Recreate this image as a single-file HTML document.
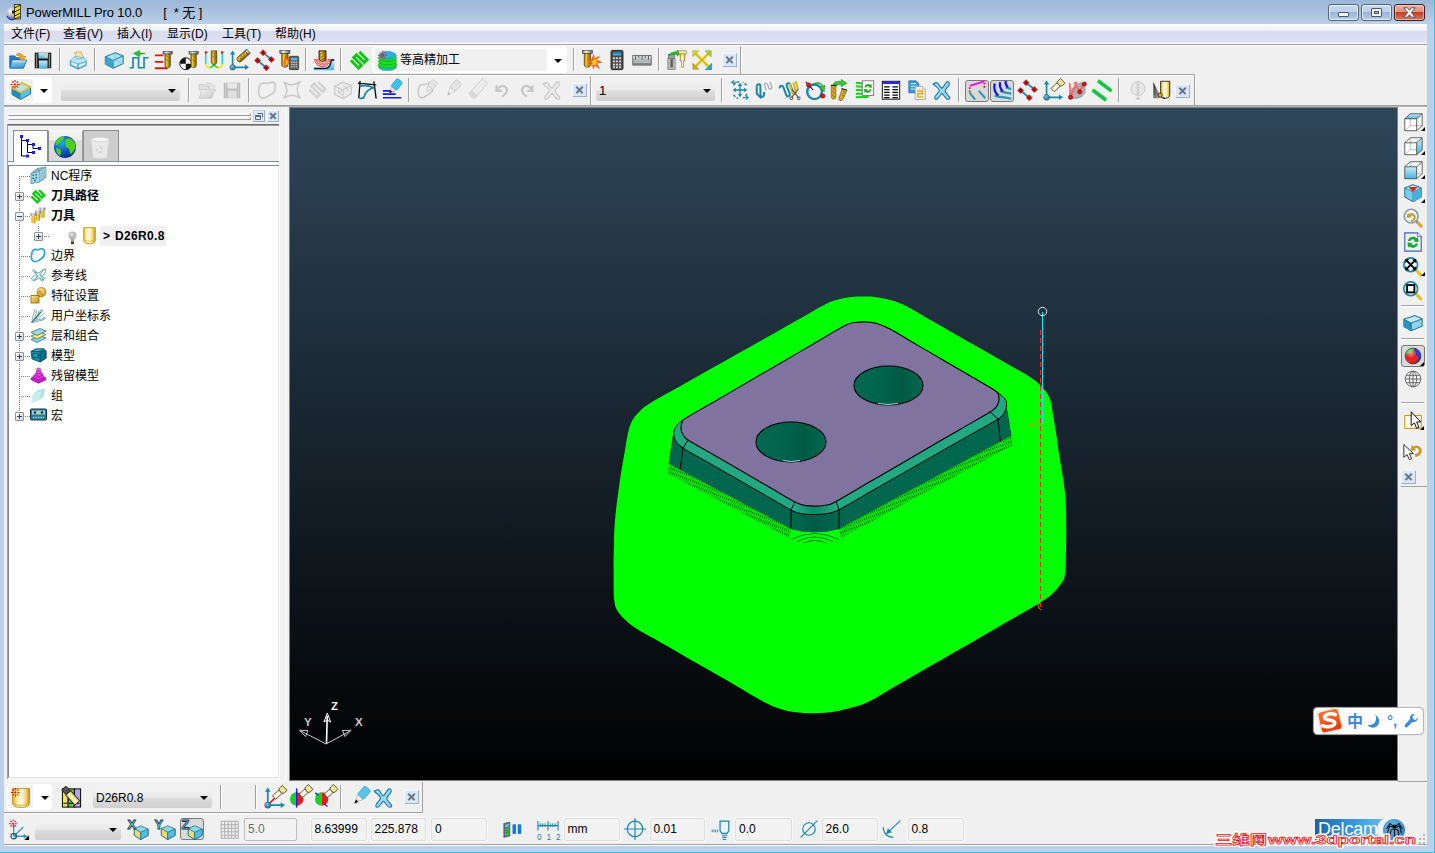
<!DOCTYPE html>
<html lang="zh-CN"><head><meta charset="utf-8"><title>PowerMILL Pro 10.0</title>
<style>
html,body{margin:0;padding:0}
body{width:1435px;height:853px;overflow:hidden;position:relative;background:#b9d1ea;font-family:"Liberation Sans","Noto Sans CJK SC",sans-serif;font-size:12px;color:#000}
div,span,svg{position:absolute;box-sizing:border-box}
svg{overflow:visible}
.ic{width:24px;height:24px}
#title{left:0;top:0;width:1435px;height:24px;background:linear-gradient(#9bb7d8 0%,#a9c1de 45%,#bbd0e9 100%)}
#ttext{left:26px;top:2.4px;font-size:13px;white-space:pre;color:#000;letter-spacing:-0.1px}
#menu{left:4px;top:24px;width:1423px;height:20px;background:linear-gradient(#fdfdfe 0%,#eceef8 34%,#d9dcee 36%,#dde0f0 90%,#f4f5fa 95%,#fff 100%)}
#menu span{top:0px;font-size:12px;white-space:pre}
#client{left:4px;top:44px;width:1423px;height:802px;background:#f0f0f0}
.sepv{width:2px;background:linear-gradient(90deg,#a0a0a0 50%,#fff 50%)}
.seph{height:2px;background:linear-gradient(#a0a0a0 50%,#fff 50%)}
.combo{padding-top:1px;background:linear-gradient(#f2f2f2 0%,#ebebeb 48%,#dddddd 52%,#cfcfcf 100%);border:1px solid #f0f0f0;border-radius:3px;font-size:13px;line-height:20px;padding-left:3px}
.combo:after{content:"";position:absolute;right:4px;top:9px;border:4px solid transparent;border-top:4px solid #000;border-bottom:0}
.wbg{background:#fff;border-radius:3px}
.arr{width:0;height:0;border:4px solid transparent;border-top:4px solid #000;border-bottom:0}
.fld{height:23px;border:1px solid #dedede;border-radius:2px;background:#f2f2f2;font-size:12px;line-height:21px;padding-left:3px;white-space:pre;box-shadow:0 0 0 1px #f9f9f9}.fld.dis{border-color:#bdbdbd;color:#6d6d6d;box-shadow:none}
.cls{width:13px;height:13px;background:#dbe6f4;border:1px solid #f4f8fc;border-right-color:#9fb0c8;border-bottom-color:#9fb0c8}
.cls:before,.cls:after{content:"";position:absolute;left:50%;top:50%;width:9px;height:1.8px;margin:-.9px 0 0 -4.5px;background:#66758c;transform:rotate(45deg)}
.cls:after{transform:rotate(-45deg)}.cls.sm:before,.cls.sm:after{width:8px;margin-left:-4px}
.pressed{border:1px solid #7a7a7a;border-radius:3px;background:#d9d9d9}
.tree{font-size:12px;white-space:pre;line-height:16px}
.tb{font-weight:bold}
.pm{width:9px;height:9px;border:1px solid #919191;background:linear-gradient(135deg,#fff,#d6d6d6);border-radius:1px}
.pm:before{content:"";position:absolute;left:1px;top:3px;width:5px;height:1px;background:#27408b}
.pm.plus:after{content:"";position:absolute;left:3px;top:1px;width:1px;height:5px;background:#27408b}
.dotv{width:1px;background-image:linear-gradient(#808080 50%,transparent 50%);background-size:1px 2px}
.doth{height:1px;background-image:linear-gradient(90deg,#808080 50%,transparent 50%);background-size:2px 1px}
</style></head><body>
<div id="title"></div>
<div id="ttext">PowerMILL Pro 10.0      [  * 无 ]</div>
<div id="menu"><span style="left:7px">文件(F)</span><span style="left:59px">查看(V)</span><span style="left:113px">插入(I)</span><span style="left:163px">显示(D)</span><span style="left:218px">工具(T)</span><span style="left:271px">帮助(H)</span></div>
<div id="client"></div>
<!-- app icon -->
<svg style="left:6px;top:4px" width="16" height="16" viewBox="0 0 16 16"><defs><radialGradient id="aig" cx=".35" cy=".35" r=".7"><stop offset="0" stop-color="#fff"/><stop offset=".6" stop-color="#b0b0b0"/><stop offset="1" stop-color="#555"/></radialGradient></defs><circle cx="6.500" cy="9" r="6" fill="url(#aig)"/><path d="M1 12a6.500 6.500 0 0 0 7 3.500" stroke="#2020e0" stroke-width="1.200" fill="none"/><rect x="8.500" y=".5" width="6" height="14.500" fill="#f0e020" stroke="#222" stroke-width=".8"/><path d="M8.500 4l6-3M8.500 8l6-3M8.500 12l6-3M8.500 15l6-2.500" stroke="#222" stroke-width="1"/><rect x="6" y="6.500" width="3" height="3" fill="#222"/></svg>
<!-- caption buttons -->
<div style="left:1328px;top:4px;width:31px;height:17px;border:1px solid #56657e;border-radius:3px;background:linear-gradient(#c6d8ee 0%,#bcd0ea 48%,#9ab6d8 50%,#b6cde8 100%);box-shadow:inset 0 0 0 1px rgba(255,255,255,.65)"></div>
<div style="left:1361px;top:4px;width:31px;height:17px;border:1px solid #56657e;border-radius:3px;background:linear-gradient(#c6d8ee 0%,#bcd0ea 48%,#9ab6d8 50%,#b6cde8 100%);box-shadow:inset 0 0 0 1px rgba(255,255,255,.65)"></div>
<div style="left:1394px;top:4px;width:31px;height:17px;border:1px solid #431a1c;border-radius:3px;background:linear-gradient(#ecae9e 0%,#e08e7a 48%,#c23f24 50%,#d87a62 100%);box-shadow:inset 0 0 0 1px rgba(255,255,255,.45)"></div>
<div style="left:1338px;top:12px;width:11px;height:5px;background:#f4f4f4;border:1px solid #4a566c;border-radius:1px"></div>
<div style="left:1371px;top:8px;width:11px;height:9px;background:#f4f4f4;border:1px solid #4a566c;border-radius:1px"></div>
<div style="left:1374px;top:11px;width:5px;height:3px;background:#9ab6d8;border:1px solid #4a566c"></div>
<svg style="left:1403px;top:7px" width="13" height="11" viewBox="0 0 13 11"><path d="M.8 .8h3.700l2 2.400 2-2.400h3.700l-3.800 4.700 3.800 4.700h-3.700l-2-2.400-2 2.400h-3.700l3.800-4.700z" fill="#f6f6f6" stroke="#4a4a5a" stroke-width=".9"/></svg>
<svg width="0" height="0" style="left:0;top:0"><defs>
<linearGradient id="gold" x1="0" x2="1"><stop offset="0" stop-color="#8a6a08"/><stop offset=".3" stop-color="#f0cc40"/><stop offset=".55" stop-color="#c89a18"/><stop offset="1" stop-color="#7a5a04"/></linearGradient>
<linearGradient id="steel" x1="0" x2="1"><stop offset="0" stop-color="#6a6a6a"/><stop offset=".35" stop-color="#f4f4f4"/><stop offset="1" stop-color="#5a5a5a"/></linearGradient>
<linearGradient id="glass" x1="0" y1="0" x2="0" y2="1"><stop offset="0" stop-color="#c8ecf8"/><stop offset="1" stop-color="#48b4dc"/></linearGradient>
<linearGradient id="fold" x1="0" y1="0" x2="0" y2="1"><stop offset="0" stop-color="#6cc0f0"/><stop offset="1" stop-color="#1c78c0"/></linearGradient>
<linearGradient id="dis" x1="0" y1="0" x2="1" y2="1"><stop offset="0" stop-color="#f4f4f4"/><stop offset="1" stop-color="#c4c4c4"/></linearGradient>
<linearGradient id="ycyl" x1="0" x2="1"><stop offset="0" stop-color="#e0a820"/><stop offset=".3" stop-color="#fff0a8"/><stop offset=".55" stop-color="#fffbe8"/><stop offset=".85" stop-color="#ecc850"/><stop offset="1" stop-color="#b88810"/></linearGradient>
<radialGradient id="ball" cx=".35" cy=".3" r=".8"><stop offset="0" stop-color="#7cc4d8"/><stop offset="1" stop-color="#1a6a88"/></radialGradient>
</defs></svg>
<svg class="ic" style="left:7.3px;top:48.6px;width:22px;height:22px" viewBox="0 0 24 24"><path d="M3 7.500h5.500l1.500 2h7.500v10h-14.500z" fill="#2a80c8" stroke="#0c4a84" stroke-width=".8"/><path d="M5.500 12h16l-3.500 9h-15z" fill="url(#fold2)" stroke="#0c5a98" stroke-width=".8"/><path d="M6.500 13.200h13.500" stroke="#e4f4fc" stroke-width="1"/><path d="M10.500 5.500c3.500-1.500 7 0 7.500 3l2.500-.5-3.500 5-4.500-3.500 2.500-.5c-.5-1.500-2-2-4-1.500z" fill="#f4a81c" stroke="#b87008" stroke-width=".6"/><defs><linearGradient id="fold2" x1="0" y1="0" x2=".3" y2="1"><stop offset="0" stop-color="#b4e0f8"/><stop offset="1" stop-color="#3c98d8"/></linearGradient></defs></svg>
<svg class="ic" style="left:32.0px;top:48.6px;width:22px;height:22px" viewBox="0 0 24 24"><defs><linearGradient id="svs" x1="0" x2="1"><stop offset="0" stop-color="#111"/><stop offset=".5" stop-color="#8a8a8a"/><stop offset="1" stop-color="#111"/></linearGradient></defs><rect x="3" y="4" width="18" height="17" fill="#0c0c0c"/><rect x="3.500" y="5" width="3" height="15.500" fill="url(#svs)"/><rect x="17.500" y="5" width="3" height="15.500" fill="url(#svs)"/><rect x="7" y="4" width="10.500" height="6.500" fill="url(#glass)"/><rect x="13" y="4" width="4" height="5.500" fill="#c8ccd0"/><rect x="7.500" y="12.500" width="9.500" height="8.500" fill="url(#glass)"/></svg>
<svg class="ic" style="left:67.0px;top:48.6px;width:22px;height:22px" viewBox="0 0 24 24"><path d="M8.500 3.500l6.500-.5 3 6-8 2z" fill="#f4e4a8" stroke="#b89848" stroke-width=".7"/><path d="M3.500 12.500l5-4 10 1 2.500 3.500v5l-9 4-8.500-4z" fill="#7cc8e8" stroke="#2a80a8" stroke-width=".8"/><path d="M3.500 12.500l8.500 3.500 9-3M12 16v6" stroke="#2a80a8" stroke-width=".7" fill="none"/><path d="M8.500 8.500l10 1 2.500 3.500-9 3-8.500-3.500z" fill="#b8e4f4"/><path d="M5 14.500l6 2.500v2l-6-2.500zM13 17.500l7-2.500v2l-7 2.500z" fill="#e4f6fc"/><path d="M9.500 9l1.500 2.500 7.500-2" stroke="#5aa8c8" stroke-width=".7" fill="none"/></svg>
<svg class="ic" style="left:103.0px;top:48.6px;width:22px;height:22px" viewBox="0 0 24 24"><path d="M2.500 8.500l11-4.500 8.500 3.500v8.500l-11 5-8.500-4.500z" fill="#a8e0f4" stroke="#14688c" stroke-width="1"/><path d="M2.500 8.500l8.500 4v8.500M11 12.500l11-5" fill="none" stroke="#14688c" stroke-width="1"/><path d="M2.500 8.500l8.500 4v8.500l-8.500-4.500z" fill="#3ca4cc"/><path d="M13.500 4v8.500l8.500 3.500M13.500 12.500l-11 4" stroke="#5cb4d4" stroke-width=".6" fill="none"/></svg>
<svg class="ic" style="left:128.0px;top:48.6px;width:22px;height:22px" viewBox="0 0 24 24"><path d="M2 20.500h3.500v-11h6v11h6v-11h5" fill="none" stroke="#1a88a8" stroke-width="1.800"/><path d="M6 5l6.500-3.500v2.500l6.500 1-6.500 1v2.500z" fill="#1cc81c" stroke="#0c8a0c" stroke-width=".5"/></svg>
<svg class="ic" style="left:153.0px;top:48.6px;width:22px;height:22px" viewBox="0 0 24 24"><path d="M2 7h9M2 14h9M2 21h14" stroke="#f01010" stroke-width="2"/><rect x="11.0" y="2.5" width="10.0" height="3" fill="url(#steel)" stroke="#333" stroke-width=".6"/><path d="M13.0 5.5h6.0v12.0q0 3 -3.0 3t-3.0 -3z" fill="url(#gold)" stroke="#3a2a00" stroke-width=".6"/><path d="M14.0 10.5l4.0 4M14.0 6.5l4.0 4" stroke="#7a5a04" stroke-width=".7" fill="none"/></svg>
<svg class="ic" style="left:178.0px;top:48.6px;width:22px;height:22px" viewBox="0 0 24 24"><circle cx="8.500" cy="16" r="6.500" fill="#fff" stroke="#111" stroke-width="1"/><path d="M8.500 16v-6.500a6.500 6.500 0 0 0-6.500 6.500zM8.500 16v6.500a6.500 6.500 0 0 0 6.500-6.500z" fill="#111"/><circle cx="8.500" cy="16" r="6.500" fill="url(#shade)" opacity="0"/><rect x="12.0" y="2.5" width="10.0" height="3" fill="url(#steel)" stroke="#333" stroke-width=".6"/><path d="M14.0 5.5h6.0v12.0q0 3 -3.0 3t-3.0 -3z" fill="url(#gold)" stroke="#3a2a00" stroke-width=".6"/><path d="M15.0 10.5l4.0 4M15.0 6.5l4.0 4" stroke="#7a5a04" stroke-width=".7" fill="none"/></svg>
<svg class="ic" style="left:203.3px;top:48.6px;width:22px;height:22px" viewBox="0 0 24 24"><path d="M3 4v12.500" stroke="#18d8f0" stroke-width="1.800"/><path d="M21 4v12.500" stroke="#18d8f0" stroke-width="1.800"/><path d="M3 16c0 4 3 5 5 4" stroke="#f0e818" stroke-width="1.800" fill="none"/><path d="M21 16c0 4-3 5-5 4" stroke="#f0e818" stroke-width="1.800" fill="none"/><path d="M7.500 20.500c2-.5 3.500-2 4.500-4 1 2 2.500 3.500 4.500 4" stroke="#20e020" stroke-width="1.800" fill="none"/><rect x="2" y="2.500" width="2.500" height="2.500" fill="#f01010"/><rect x="19.500" y="2.500" width="2.500" height="2.500" fill="#f01010"/><path d="M9.0 2.0h6.0v12.0q0 3 -3.0 3t-3.0 -3z" fill="url(#gold)" stroke="#3a2a00" stroke-width=".6"/><path d="M10.0 7.0l4.0 4M10.0 3.0l4.0 4" stroke="#7a5a04" stroke-width=".7" fill="none"/></svg>
<svg class="ic" style="left:227.7px;top:48.6px;width:22px;height:22px" viewBox="0 0 24 24"><path d="M5 20v-15M5 20h15" stroke="#1a88a8" stroke-width="1.800"/><path d="M5 1.500l-3 4.500h6zM23 20l-4.500-3v6z" fill="#1a88a8"/><circle cx="5" cy="20" r="3" fill="url(#ball)" stroke="#0c4a64" stroke-width=".5"/><g transform="rotate(48 15 9)"><rect x="12" y="-1" width="6" height="3" fill="url(#steel)" stroke="#222" stroke-width=".6"/><path d="M12 2h6v10q0 3-3 3t-3-3z" fill="url(#gold)" stroke="#3a2a00" stroke-width=".6"/><path d="M13 4l4 4M13 8l4 4" stroke="#7a5a04" stroke-width=".7"/></g></svg>
<svg class="ic" style="left:252.5px;top:48.6px;width:22px;height:22px" viewBox="0 0 24 24"><path d="M11 4l9 7.500M5 12.500l9.500 8" fill="none" stroke="#2a8cac" stroke-width="2"/><g fill="#e81010" stroke="#700" stroke-width=".5"><rect x="8.700" y="1.700" width="4.600" height="4.600" transform="rotate(45 11 4)"/><rect x="17.700" y="9.200" width="4.600" height="4.600" transform="rotate(45 20 11.500)"/><rect x="12.200" y="18.200" width="4.600" height="4.600" transform="rotate(45 14.500 20.500)"/><rect x="2.700" y="10.200" width="4.600" height="4.600" transform="rotate(45 5 12.500)"/></g><g fill="#000"><circle cx="11" cy="4" r="1"/><circle cx="20" cy="11.500" r="1"/><circle cx="14.500" cy="20.500" r="1"/><circle cx="5" cy="12.500" r="1"/></g></svg>
<svg class="ic" style="left:278.0px;top:48.6px;width:22px;height:22px" viewBox="0 0 24 24"><rect x="2" y="1.500" width="11" height="3.500" fill="url(#steel)" stroke="#333" stroke-width=".6"/><path d="M4 5h7v12q0 3-3.500 3t-3.500-3z" fill="url(#gold)" stroke="#3a2a00" stroke-width=".6"/><path d="M8 8l2 3 1-4 1 5-1 6-3-1-1 3-1-5 1-3z" fill="#f85810"/><path d="M8.500 11l1 2 .5-2 .5 4-1 3-1.500-1z" fill="#f8d010"/><rect x="12.500" y="8" width="10" height="14.500" rx="1" fill="#5a5a5a" stroke="#222" stroke-width=".7"/><rect x="14" y="9.500" width="7" height="3" fill="#48b8e8"/><path d="M14 14.500h7M14 17h7M14 19.500h7" stroke="#c8c8c8" stroke-width="1.600" stroke-dasharray="1.800 .8"/></svg>
<svg class="ic" style="left:313.0px;top:48.6px;width:22px;height:22px" viewBox="0 0 24 24"><g fill="none" stroke="#f81010" stroke-width=".9"><path d="M1.800 10.800a8.500 8.500 0 0 0 17 0"/><path d="M3.600 10.800a6.700 6.700 0 0 0 13.400 0"/><path d="M5.400 10.800a4.900 4.900 0 0 0 9.800 0"/></g><path d="M1 21.300h12c4 0 6.500-4 7-9.300h3.200v11.200h-22.200z" fill="url(#glass)"/><path d="M1 21.200h12c4 0 6.500-4 7-9.200h3.200" stroke="#000" stroke-width="1.400" fill="none"/><path d="M6.600 2h7.600v8q0 3.600-3.800 3.600t-3.800-3.600z" fill="url(#gold)" stroke="#1a1000" stroke-width=".9"/><path d="M7.600 6l5.500-3.500M7.600 9.500l5.500-3.500M8 12.500l5-3" stroke="#7a5a04" stroke-width=".8"/></svg>
<svg class="ic" style="left:347.8px;top:48.6px;width:22px;height:22px" viewBox="0 0 24 24"><path d="M12.400 3.100l8.500 8.500-3.100 3.100-8.500-8.500-3.100 3.100 8.500 8.500-3.100 3.100-8.500-8.500" fill="none" stroke="#10c814" stroke-width="3.100" stroke-linejoin="miter"/></svg>
<svg class="ic" style="left:581.0px;top:48.6px;width:22px;height:22px" viewBox="0 0 24 24"><rect x="1.500" y="1.500" width="11" height="3.500" fill="url(#steel)" stroke="#333" stroke-width=".6"/><path d="M3.500 5h7v12q0 3-3.500 3t-3.500-3z" fill="url(#gold)" stroke="#3a2a00" stroke-width=".6"/><path d="M14 5l1 5 6-3-3.500 5 6 2.500-6 1.500 3.500 6-6-3.500-1.500 4-1.500-5-6 2 4-5-4-3 5.500-.5z" fill="#f86010"/><path d="M14 9l.8 3 3-1-1.500 2.500 2.500 1.500-3 .5.500 3-2.300-2-2.500 1.500 1.500-3-2-1.500 2.500-.5z" fill="#f8e020"/></svg>
<svg class="ic" style="left:606.0px;top:48.6px;width:22px;height:22px" viewBox="0 0 24 24"><rect x="5.500" y="1.500" width="13" height="21" rx="1.500" fill="#4a4a4a" stroke="#1a1a1a" stroke-width="1"/><rect x="7.500" y="3.500" width="9" height="3.500" fill="#38b0e8"/><rect x="7.500" y="3.500" width="9" height="1.500" fill="#1878a8"/><g fill="#d0d0d0"><rect x="7.500" y="9" width="2.300" height="2"/><rect x="10.800" y="9" width="2.300" height="2"/><rect x="14.200" y="9" width="2.300" height="2"/><rect x="7.500" y="12.500" width="2.300" height="2"/><rect x="10.800" y="12.500" width="2.300" height="2"/><rect x="14.200" y="12.500" width="2.300" height="2"/><rect x="7.500" y="16" width="2.300" height="2"/><rect x="10.800" y="16" width="2.300" height="2"/><rect x="14.200" y="16" width="2.300" height="2"/><rect x="7.500" y="19" width="2.300" height="2"/><rect x="10.800" y="19" width="2.300" height="2"/><rect x="14.200" y="19" width="2.300" height="2"/></g></svg>
<svg class="ic" style="left:631.0px;top:48.6px;width:22px;height:22px" viewBox="0 0 24 24"><rect x="2" y="7" width="20" height="10.500" fill="#b4b8b8" stroke="#5a5a5a" stroke-width="1"/><rect x="2.500" y="7.500" width="19" height="3" fill="#d8dcdc"/><path d="M5 7.500v4M8.500 7.500v2.500M12 7.500v4M15.500 7.500v2.500M19 7.500v4" stroke="#4a4a4a" stroke-width="1"/><rect x="2" y="15.500" width="20" height="2" fill="#7a7a7a"/></svg>
<svg class="ic" style="left:666.0px;top:48.6px;width:22px;height:22px" viewBox="0 0 24 24"><rect x="2.500" y="6" width="7" height="5" fill="#a0a0a0" stroke="#555" stroke-width=".6"/><rect x="2" y="10.500" width="8" height="12" fill="#b8b8b8" stroke="#666" stroke-width=".6"/><rect x="5" y="11" width="2.500" height="9" fill="#5a5a5a"/><path d="M3 6.500c2-3 6-3.500 9-3.500v-2l4.500 3.500-4.500 3.500v-2c-3 0-6 0-8 1.500z" fill="#20c020" stroke="#0c8a0c" stroke-width=".4"/><rect x="14" y="2" width="8" height="3.500" fill="#f8e8a0" stroke="#8a6a10" stroke-width=".6"/><path d="M15.500 5.500h5v7.500h-1.500v7h-2v-7h-1.500z" fill="url(#ycyl)" stroke="#8a6a10" stroke-width=".6"/></svg>
<svg class="ic" style="left:691.0px;top:48.6px;width:22px;height:22px" viewBox="0 0 24 24"><path d="M4 4l16.500 16.500" stroke="#e8d020" stroke-width="3"/><path d="M20 4L4 20" stroke="#e8d020" stroke-width="3"/><path d="M2 2h6.500l-6.500 6.500z" fill="#d8e030" stroke="#8a8a10" stroke-width=".5"/><path d="M22 2v6.500l-6.500-6.500z" fill="#a8d040" stroke="#6a8a10" stroke-width=".5"/><path d="M2 22v-6.500l6.500 6.500z" fill="#d8b020" stroke="#8a6a10" stroke-width=".5"/><path d="M22.500 22.500h-7l7-7z" fill="#28a8d0" stroke="#106888" stroke-width=".5"/><path d="M4 4l16.500 16.500M20 4L4 20" stroke="#7a7a10" stroke-width=".4" fill="none"/></svg>
<div class="sepv" style="left:59px;top:48px;height:23px"></div>
<div class="sepv" style="left:94px;top:48px;height:23px"></div>
<div class="sepv" style="left:305px;top:48px;height:23px"></div>
<div class="sepv" style="left:340px;top:48px;height:23px"></div>
<div class="sepv" style="left:573px;top:48px;height:23px"></div>
<div class="sepv" style="left:658px;top:48px;height:23px"></div>
<div class="wbg" style="left:372px;top:47px;width:195px;height:26px"></div>
<div style="left:375px;top:49px;width:172px;height:22px;background:#f0f0f0"></div>
<svg class="ic" style="left:375.5px;top:48.5px;width:23px;height:23px" viewBox="0 0 24 24"><g stroke="#0a9a10" stroke-width=".6"><ellipse cx="12" cy="19" rx="9" ry="3.500" fill="#28b8d8"/><path d="M3 15v4M21 15v4" /><ellipse cx="12" cy="16.500" rx="9.500" ry="3.500" fill="#18e028"/><ellipse cx="12" cy="13" rx="9.500" ry="3.500" fill="#18e028"/><ellipse cx="12" cy="9.500" rx="9.500" ry="3.500" fill="#18e028"/><ellipse cx="12" cy="6.500" rx="9" ry="3.800" fill="#28b0dc" stroke="#1888b0"/></g><path d="M7 2v9M2.500 6.500h9M4 3.500l6 6M10 3.500l-6 6" stroke="#f01010" stroke-width="1" stroke-dasharray="1.500 1"/></svg>
<span style="left:400px;top:52px;font-size:12px;white-space:pre;line-height:16px">等高精加工</span>
<div class="arr" style="left:554px;top:59px"></div>
<div class="cls" style="left:722px;top:53px;width:15px;height:14px"></div>
<div class="wbg" style="left:7px;top:77px;width:45px;height:26px"></div>
<div style="left:9px;top:79px;width:24px;height:22px;background:#f0f0f0"></div>
<svg class="ic" style="left:9.0px;top:78.0px;width:24px;height:24px" viewBox="0 0 24 24"><path d="M3 10l10-5 8.500 4v7l-10 5.500-8.500-5z" fill="#5cc0e4" stroke="#0c5878" stroke-width=".8"/><path d="M3 10l8.500 4.500v7l-8.500-5z" fill="#1c8cb8"/><path d="M3 10l10-5 8.500 4-10 5.500z" fill="#b4e4f4" stroke="#e8b820" stroke-width="1.600" stroke-linejoin="round"/><path d="M6 2v9M1.500 6.500h9M3 3.500l6 6M9 3.500l-6 6" stroke="#f01010" stroke-width="1.100" stroke-dasharray="2 1.200"/></svg>
<div class="arr" style="left:40px;top:89px"></div>
<div class="combo" style="left:60px;top:79px;width:121px;height:23px"></div>
<div class="sepv" style="left:188px;top:78px;height:24px"></div>
<div class="sepv" style="left:248px;top:78px;height:24px"></div>
<div class="sepv" style="left:408px;top:78px;height:24px"></div>
<div class="sepv" style="left:721px;top:78px;height:24px"></div>
<div class="sepv" style="left:958px;top:78px;height:24px"></div>
<div class="sepv" style="left:1118px;top:78px;height:24px"></div>
<svg class="ic" style="left:196.3px;top:79.0px;width:22px;height:22px" viewBox="0 0 24 24"><path d="M3.500 6h5.500l1.500 2h7.500v4h-14.500z" fill="#e0e0e0" stroke="#c6c6c6" stroke-width=".8"/><path d="M6.500 11.500h15l-4.500 9.500h-13.500z" fill="url(#dis)" stroke="#c6c6c6" stroke-width=".8"/><path d="M11.500 4.500c3.500-1 6.500.5 7 3.500l2.500-.5-3.500 5-4.500-3.500 2.500-.5c-.5-1.500-2-2.500-4-2z" fill="#e8e8e8" stroke="#c6c6c6" stroke-width=".7"/></svg>
<svg class="ic" style="left:221.0px;top:79.0px;width:22px;height:22px" viewBox="0 0 24 24"><defs><linearGradient id="dsv" x1="0" x2="1"><stop offset="0" stop-color="#b0b0b0"/><stop offset=".5" stop-color="#d4d4d4"/><stop offset="1" stop-color="#b0b0b0"/></linearGradient></defs><rect x="3" y="4" width="18" height="17" fill="#bcbcbc"/><rect x="3.500" y="4.500" width="3" height="16" fill="url(#dsv)"/><rect x="17.500" y="4.500" width="3" height="16" fill="url(#dsv)"/><rect x="7" y="4.500" width="10.500" height="6" fill="#e8e8e8"/><rect x="7.500" y="12.500" width="9.500" height="8" fill="#e0e0e0"/></svg>
<svg class="ic" style="left:255.5px;top:79.0px;width:22px;height:22px" viewBox="0 0 24 24"><path d="M5 6C8 2 11 6 14 4.500s6.500-2 7 3-1.500 8-5 9.500-5.500 4.500-9 4S2.500 16 3 12 3 8 5 6z" fill="none" stroke="#c6c6c6" stroke-width="1.600"/></svg>
<svg class="ic" style="left:281.0px;top:79.0px;width:22px;height:22px" viewBox="0 0 24 24"><path d="M3 3.500c6 4 12 4 18-1-4.500 6-4.500 12 0 18.500-6-4.500-12-4.500-18 0 4.500-6 4.500-12 0-17.500z" fill="none" stroke="#cacaca" stroke-width="1.600"/></svg>
<svg class="ic" style="left:305.8px;top:79.0px;width:22px;height:22px" viewBox="0 0 24 24"><path d="M13.500 3.500l7.500 7.500-3 3-9-9-3 3 9 9-3 3-8.500-8.500" fill="none" stroke="#d2d2d2" stroke-width="2.600" stroke-linejoin="miter"/></svg>
<svg class="ic" style="left:331.5px;top:79.0px;width:22px;height:22px" viewBox="0 0 24 24"><path d="M3 8l9-4.500 9 3.500v9l-9 5.500-9-4.500z" fill="#ececec" stroke="#c6c6c6" stroke-width="1.200"/><path d="M3 8l9 4v9.500M12 12l9-5M7 10v5l5 2.500M7 15l5-3M12 7.500l5 2v4" fill="none" stroke="#c6c6c6" stroke-width="1"/></svg>
<svg class="ic" style="left:356.0px;top:79.0px;width:22px;height:22px" viewBox="0 0 24 24"><path d="M2 4.500l20 2M4.500 2l-1.500 19M19.500 2.500l2.500 19" stroke="#000" stroke-width="1.400" fill="none"/><path d="M4 8c5-1.500 10-1 15.500 1.500M3.500 21c3 .5 5 0 5.500-2 1.500-5 6-8.500 11-9.500" stroke="#1a88a8" stroke-width="1.900" fill="none"/></svg>
<svg class="ic" style="left:380.8px;top:79.0px;width:22px;height:22px" viewBox="0 0 24 24"><path d="M2 13h12M2 16.500h14M2 20.500h20" stroke="#1818f0" stroke-width="1.800"/><g transform="rotate(40 14 9)"><rect x="10.500" y="-1" width="8" height="11" rx="2" fill="#38c4ec" stroke="#1888b0" stroke-width=".6"/><path d="M11.500 10h6l-1.500 4h-3z" fill="#e8e8e8" stroke="#888" stroke-width=".5"/><path d="M13 14h3l-1.500 3.500z" fill="#111"/></g></svg>
<svg class="ic" style="left:416.0px;top:79.0px;width:22px;height:22px" viewBox="0 0 24 24"><path d="M4 8C6 4 9 7 12 5.500s6-2 6.500 2.500-1 7-4.500 8.500-5 4.500-8 4S2 16 2.500 12.500 2.500 10 4 8z" fill="none" stroke="#c6c6c6" stroke-width="1.600"/><g transform="rotate(40 15 9)"><rect x="12" y="0" width="7" height="9" rx="1.500" fill="#e4e4e4" stroke="#c6c6c6" stroke-width=".8"/><path d="M12.500 9h6l-3 6z" fill="#f0f0f0" stroke="#c6c6c6" stroke-width=".8"/></g></svg>
<svg class="ic" style="left:441.3px;top:79.0px;width:22px;height:22px" viewBox="0 0 24 24"><g transform="rotate(40 12 12)"><rect x="8" y="0" width="8" height="11" rx="1.500" fill="#e2e2e2" stroke="#c6c6c6" stroke-width=".8"/><path d="M8.500 11h7l-3.500 8z" fill="#f2f2f2" stroke="#c6c6c6" stroke-width=".8"/><path d="M11 16.500h2l-1 3z" fill="#aaa"/></g></svg>
<svg class="ic" style="left:466.0px;top:79.0px;width:22px;height:22px" viewBox="0 0 24 24"><g transform="rotate(42 12 12)"><rect x="8" y="-1" width="8" height="22" fill="#ececec" stroke="#c6c6c6" stroke-width=".8"/><rect x="8" y="16" width="8" height="5" fill="#d8d8d8"/></g></svg>
<svg class="ic" style="left:491.2px;top:79.0px;width:22px;height:22px" viewBox="0 0 24 24"><path d="M6 7v6h6" fill="none" stroke="#c6c6c6" stroke-width="2.400"/><path d="M7 12c1-4 6-6 9-3s1 8-4 10" fill="none" stroke="#c6c6c6" stroke-width="2.400"/></svg>
<svg class="ic" style="left:515.5px;top:79.0px;width:22px;height:22px" viewBox="0 0 24 24"><path d="M18 7v6h-6" fill="none" stroke="#c6c6c6" stroke-width="2.400"/><path d="M17 12c-1-4-6-6-9-3s-1 8 4 10" fill="none" stroke="#c6c6c6" stroke-width="2.400"/></svg>
<svg class="ic" style="left:540.5px;top:79.0px;width:22px;height:22px" viewBox="0 0 24 24"><path d="M3.500 5c2-2 4-1 5 1s2.500 4 3.500 4 3-4 4.500-6 4-1 3.500 1.500-4 5-4.500 7 3 5 4.500 7-1 3.500-3 2-4-5.500-5-5.500-3 4-5 5.500-4 0-2.500-2.500 4.500-5 4.500-6.500-3-4-5-5.500-2-1.500-1.500-2z" fill="#ececec" stroke="#c6c6c6" stroke-width="1.200"/></svg>
<div class="cls" style="left:572px;top:83px;width:15px;height:14px"></div>
<div class="combo" style="left:595px;top:79px;width:121px;height:23px">1</div>
<svg class="ic" style="left:728.6px;top:79.0px;width:22px;height:22px" viewBox="0 0 24 24"><g fill="none" stroke="#1a88a8" stroke-width="1.600"><path d="M5 7a9 9 0 0 1 6-4M19 7a9 9 0 0 0-4-3.500M5 17a9 9 0 0 0 5 4M19.500 16a9 9 0 0 1-4 4.500" stroke-dasharray="3 1.500"/><path d="M12 6v12M6 12h12" stroke-width="1.400"/></g><path d="M12 4l-2.500 3.500h5zM12 20l-2.500-3.500h5zM4 12l3.500-2.500v5zM20 12l-3.500-2.500v5z" fill="#1a88a8"/><path d="M3 3.500h5M5.500 1.500l-2.500 2 2.500 2M16 20.500h5M18.500 18.500l2.500 2-2.500 2" stroke="#1a88a8" stroke-width="1.100" fill="none"/></svg>
<svg class="ic" style="left:754.0px;top:79.0px;width:22px;height:22px" viewBox="0 0 24 24"><path d="M3 8c0-3 4-3 4 0v9c0 3 4 3 4 0V8c0-3 4-3 4 0v6" fill="none" stroke="#1a88a8" stroke-width="2.200"/><path d="M3 8v8l5 5" fill="none" stroke="#1a88a8" stroke-width="2.200"/><rect x="9.500" y="1.500" width="12.500" height="12.500" fill="#fff"/><path d="M12 12V6c0-2.500 3.500-2.500 3.500 0v4c0 2.500 3.500 2.500 3.500 0V4" fill="none" stroke="#b4b4b4" stroke-width="1.800" transform="rotate(-20 15 8)"/></svg>
<svg class="ic" style="left:779.0px;top:79.0px;width:22px;height:22px" viewBox="0 0 24 24"><path d="M2 8c0-3 4-3 4 0v9c0 3 4 3 4 0V8c0-3 4-3 4 0v9" fill="none" stroke="#1a88a8" stroke-width="2.200" transform="rotate(-20 8 12)"/><path d="M13 4v10c0 3 4 3 4 0V4M20 3v10" fill="none" stroke="#d8b428" stroke-width="2.200" transform="rotate(-15 16 9)"/><path d="M14 11l7 9M21 11l-7 9" stroke="#5a5a5a" stroke-width="1.200"/><circle cx="13.500" cy="21" r="1.500" fill="none" stroke="#333" stroke-width="1"/><circle cx="21.500" cy="21" r="1.500" fill="none" stroke="#333" stroke-width="1"/></svg>
<svg class="ic" style="left:804.0px;top:79.0px;width:22px;height:22px" viewBox="0 0 24 24"><circle cx="11.500" cy="14" r="8" fill="none" stroke="#1a88a8" stroke-width="2.600"/><path d="M2 3l8 9" stroke="#000" stroke-width="1.200"/><path d="M10 6.500c4-3 8-2 10 1.500l-3 1 5 5 1-7-2 .5c-2-4-7-5-11-2z" fill="#38c838" stroke="#0c7a0c" stroke-width=".5"/><circle cx="5" cy="6.500" r="2.400" fill="#f01010" stroke="#600" stroke-width=".5"/><circle cx="20.500" cy="18.500" r="2.400" fill="#f01010" stroke="#600" stroke-width=".5"/></svg>
<svg class="ic" style="left:828.8px;top:79.0px;width:22px;height:22px" viewBox="0 0 24 24"><g stroke="#5a4a08" stroke-width=".6"><path d="M2.500 7h5v12q0 3-2.500 3t-2.500-3z" fill="#d8a820"/><path d="M14 11l5 1-3 10q-1 2.500-3 2t-1.500-3z" fill="#d8a820" transform="rotate(8 16 16)"/></g><path d="M3 9l4 3M3 13l4 3M3 17l4 3M15 13l3 2M14 17l3 2" stroke="#7a5a04" stroke-width=".7"/><path d="M4.500 7c0-4 4-5 9-4.500v-2l6 4-6 4v-2c-3-.5-5.500 0-6 2z" fill="#38c838" stroke="#0c7a0c" stroke-width=".5"/><path d="M2 7h6M13.500 10.500l6 1.500" stroke="#333" stroke-width="1.200"/></svg>
<svg class="ic" style="left:853.8px;top:79.0px;width:22px;height:22px" viewBox="0 0 24 24"><path d="M2 4l14 1.500M2 8l14 1M2 12l14 .5M2 16l14 0M2 20l14-.5" stroke="#18d020" stroke-width="2.200"/><rect x="9" y="2" width="12.500" height="16" fill="#fff" stroke="#5a5a5a" stroke-width=".8"/><path d="M11.500 9a4 4 0 0 1 6.500-2.500l1-1.500.5 4.500-4.500-.5 1.500-1a2.500 2.500 0 0 0-3.500 1.500zM19 11.500a4 4 0 0 1-6.500 2.500l-1 1.500-.5-4.500 4.500.5-1.500 1a2.500 2.500 0 0 0 3.500-1.500z" fill="#18a818"/></svg>
<svg class="ic" style="left:880.0px;top:79.0px;width:22px;height:22px" viewBox="0 0 24 24"><rect x="2.500" y="2.500" width="19" height="19.500" fill="#fff" stroke="#000" stroke-width="1"/><rect x="3" y="3" width="18" height="2.500" fill="#2828e8"/><path d="M4.500 8.500h6M13.500 8.500h6M4.500 11.500h6M13.500 11.500h6M4.500 14.500h6M13.500 14.500h6M4.500 17.500h6M13.500 17.500h6M4.500 20.300h6M13.500 20.300h6" stroke="#000" stroke-width="1.400"/></svg>
<svg class="ic" style="left:905.8px;top:79.0px;width:22px;height:22px" viewBox="0 0 24 24"><path d="M3 2h8l3 3v10h-11z" fill="#3c98d0" stroke="#185888" stroke-width=".7"/><path d="M5 5h6M5 8h6M5 11h6" stroke="#a8dcf4" stroke-width="1.300"/><path d="M10 8h8l3 3v11.500h-11z" fill="#f4f0e0" stroke="#8a8a8a" stroke-width=".7"/><path d="M18 8v3h3" fill="#fff" stroke="#8a8a8a" stroke-width=".6"/><path d="M12 13h6v3h-5v3.500h6" stroke="#d8a820" stroke-width="1.600" fill="none"/></svg>
<svg class="ic" style="left:930.8px;top:79.0px;width:22px;height:22px" viewBox="0 0 24 24"><path d="M3.500 5c2-2 4-1 5 1s2.500 4 3.500 4 3-4 4.500-6 4-1 3.500 1.500-4 5-4.500 7 3 5 4.500 7-1 3.500-3 2-4-5.500-5-5.500-3 4-5 5.500-4 0-2.500-2.500 4.500-5 4.500-6.500-3-4-5-5.500-2-1.500-1.500-2z" fill="#9cd8f0" stroke="#1a78a0" stroke-width="1.200"/></svg>
<div class="pressed" style="left:965px;top:80px;width:24px;height:22px"></div>
<div class="pressed" style="left:990px;top:80px;width:24px;height:22px"></div>
<svg class="ic" style="left:966.0px;top:79.0px;width:22px;height:22px" viewBox="0 0 24 24"><path d="M14 13l7 8M4 15l6 7.500" stroke="#2a98b0" stroke-width="2.200"/><path d="M4 7.500l16-5" stroke="#f010e0" stroke-width="2.200"/><path d="M4 9v7M20 4v6" stroke="#f01010" stroke-width="1.800" stroke-dasharray="2 1.500"/></svg>
<svg class="ic" style="left:991.0px;top:79.0px;width:22px;height:22px" viewBox="0 0 24 24"><path d="M4 18c4 2 10 1.500 18 3.500M10 13c3 1.500 7 2 12 3M16 9c2 1 4 1.500 6 2" stroke="#2a98b0" stroke-width="2.400" fill="none"/><path d="M4 5c-1 5 0 10 4 13M10 3.500c-1 4 0 7 3 10M16 2c-.5 3 .5 5 2.500 7" stroke="#1010f0" stroke-width="2.400" fill="none"/></svg>
<svg class="ic" style="left:1016.0px;top:79.0px;width:22px;height:22px" viewBox="0 0 24 24"><path d="M11 4l9 7.500M5 12.500l9.500 8" fill="none" stroke="#2a8cac" stroke-width="2"/><g fill="#e81010" stroke="#700" stroke-width=".5"><rect x="8.700" y="1.700" width="4.600" height="4.600" transform="rotate(45 11 4)"/><rect x="17.700" y="9.200" width="4.600" height="4.600" transform="rotate(45 20 11.500)"/><rect x="12.200" y="18.200" width="4.600" height="4.600" transform="rotate(45 14.500 20.500)"/><rect x="2.700" y="10.200" width="4.600" height="4.600" transform="rotate(45 5 12.500)"/></g><g fill="#000"><circle cx="11" cy="4" r="1"/><circle cx="20" cy="11.500" r="1"/><circle cx="14.500" cy="20.500" r="1"/><circle cx="5" cy="12.500" r="1"/></g></svg>
<svg class="ic" style="left:1041.5px;top:79.0px;width:22px;height:22px" viewBox="0 0 24 24"><path d="M5 20v-15M5 20h15" stroke="#1a88a8" stroke-width="1.800"/><path d="M5 1.500l-3 4.500h6zM23 20l-4.500-3v6z" fill="#1a88a8"/><circle cx="5" cy="20" r="3.200" fill="url(#ball)" stroke="#0c4a64" stroke-width=".5"/><g transform="rotate(48 16 8)"><path d="M13.500 5h5v9h-5z" fill="#fff8d8" stroke="#222" stroke-width=".7"/><path d="M12.500 -1h7v4l-1 2h-5l-1-2z" fill="#f8e48a" stroke="#222" stroke-width=".7"/></g></svg>
<svg class="ic" style="left:1066.2px;top:79.0px;width:22px;height:22px" viewBox="0 0 24 24"><path d="M3 20c1-8 6-14 14-16 4 3 5 8 3 12s-9 7-17 4z" fill="#b0b0b0" stroke="#777" stroke-width=".5"/><path d="M5 20L4 4.500M5 20L12 3M15 14L9 3.500M15 14L19 5" stroke="#f86060" stroke-width="2" opacity=".9"/><g fill="#f01010" stroke="#400" stroke-width=".6"><circle cx="5" cy="20" r="2.300"/><circle cx="15" cy="14" r="2.300"/><circle cx="20" cy="5.500" r="2.300"/></g></svg>
<svg class="ic" style="left:1090.6px;top:79.0px;width:22px;height:22px" viewBox="0 0 24 24"><path d="M3 13l12 9M9 3l12 9" stroke="#18e020" stroke-width="4.400" stroke-linecap="round"/><path d="M3 13l12 9M9 3l12 9" stroke="#2a98b0" stroke-width="1.600" stroke-linecap="round"/></svg>
<svg class="ic" style="left:1126.7px;top:79.0px;width:22px;height:22px" viewBox="0 0 24 24"><path d="M12 1.500v21" stroke="#c8c8c8" stroke-width="1.400"/><ellipse cx="12" cy="10.500" rx="7.500" ry="7.500" fill="#e8e8e8" stroke="#c4c4c4" stroke-width="1"/><path d="M10.500 3.500h3v13q0 1.500-1.500 1.500t-1.500-1.500z" fill="#d0d0d0"/><path d="M9.500 21.500h5" stroke="#c8c8c8" stroke-width="1.400"/></svg>
<svg class="ic" style="left:1150.8px;top:79.0px;width:22px;height:22px" viewBox="0 0 24 24"><defs><linearGradient id="tri" x1="0" y1="0" x2="1" y2="1"><stop offset="0" stop-color="#222"/><stop offset="1" stop-color="#bbb"/></linearGradient></defs><path d="M2.500 3l8.500 18h-8.500z" fill="url(#tri)"/><path d="M10.500 2.500h10v14.500q0 4-5 4t-5-4z" fill="url(#ycyl)" stroke="#000" stroke-width=".8"/><path d="M10.500 17q0 4 5 4" fill="none" stroke="#000" stroke-width="1"/><circle cx="10" cy="17.500" r="2.300" fill="#f8a818" stroke="#000" stroke-width=".7"/></svg>
<div class="cls" style="left:1175px;top:84px;width:15px;height:14px"></div>
<!-- toolbar separators / lines -->
<div style="left:4px;top:44px;width:1423px;height:1px;background:#a0a0a0"></div>
<div style="left:4px;top:45px;width:1423px;height:1px;background:#fff"></div>
<div style="left:4px;top:74px;width:1191px;height:1px;background:#a0a0a0"></div>
<div style="left:4px;top:75px;width:1191px;height:1px;background:#fff"></div>
<div style="left:740px;top:46px;width:1px;height:28px;background:#a0a0a0"></div>
<div style="left:741px;top:46px;width:1px;height:28px;background:#fff"></div>
<div style="left:1194px;top:74px;width:1px;height:31px;background:#a0a0a0"></div>
<div style="left:1195px;top:74px;width:1px;height:31px;background:#fff"></div>
<div style="left:590px;top:76px;width:1px;height:29px;background:#a0a0a0"></div>
<div style="left:591px;top:76px;width:1px;height:29px;background:#fff"></div>
<div style="left:4px;top:105px;width:1423px;height:1px;background:#a0a0a0"></div>
<div style="left:4px;top:106px;width:1423px;height:1px;background:#b4b4b4"></div>
<!-- left panel -->
<div style="left:285px;top:107px;width:1px;height:674px;background:#fff"></div>
<div style="left:8px;top:113px;width:243px;height:3px;border:1px solid #a0a0a0;border-top-color:#fff;border-left-color:#fff;background:#f0f0f0"></div>
<div style="left:8px;top:117px;width:243px;height:3px;border:1px solid #a0a0a0;border-top-color:#fff;border-left-color:#fff;background:#f0f0f0"></div>
<div style="left:253px;top:110px;width:12px;height:12px;background:#dfe8f5;border:1px solid #c5d2e3;border-right-color:#9aa9bd;border-bottom-color:#9aa9bd"></div>
<svg style="left:253px;top:110px" width="12" height="12"><path d="M4.5 3.5h5v4M2.5 5.5h5v4h-5z M2.5 6.5h5" fill="none" stroke="#5d6b80" stroke-width="1"/></svg>
<div class="cls sm" style="left:267px;top:110px;width:12px;height:12px"></div>
<div style="left:7px;top:124px;width:273px;height:2px;background:linear-gradient(#696969 50%,#a0a0a0 50%)"></div>
<div style="left:279px;top:124px;width:1px;height:656px;background:#fff"></div><div style="left:7px;top:779px;width:273px;height:1px;background:#fff"></div>
<div style="left:7px;top:124px;width:1px;height:655px;background:#a0a0a0"></div>
<!-- tabs -->
<div style="left:13px;top:130px;width:35px;height:32px;background:#fff;border:1px solid #8c8c8c;border-bottom:0"></div>
<div style="left:48px;top:130px;width:35px;height:31px;background:linear-gradient(#f4f4f4 0,#ededed 30%,#dcdcdc 32%,#d8d8d8 100%);border:1px solid #a0a0a0;border-bottom:0;border-top-color:#fff;border-left-color:#8c8c8c"></div>
<div style="left:83px;top:130px;width:36px;height:31px;background:#cdcdcd;border:1px solid #8c8c8c;border-bottom:0"></div>
<div style="left:8px;top:161px;width:271px;height:1px;background:#7f8c99"></div>
<div style="left:14px;top:161px;width:33px;height:1px;background:#fff"></div>
<div style="left:8px;top:162px;width:271px;height:3px;background:#fff"></div>
<div style="left:8px;top:165px;width:271px;height:1px;background:#828790"></div>
<div style="left:8px;top:166px;width:271px;height:612px;background:#fff;border-left:1px solid #828790;border-right:1px solid #e3e3e3;border-bottom:1px solid #e3e3e3"></div>
<!-- tab icons -->
<svg style="left:19px;top:134px" width="24" height="24" viewBox="0 0 24 24"><path d="M2.5 3v19h5M2.5 6.5h5M8.5 7v11.5h5M8.5 10.5h5M14 11v3.5h5.5" fill="none" stroke="#000" stroke-width="1"/><g fill="#1a1aff"><rect x="1" y="1" width="3" height="3"/><rect x="7" y="5" width="3" height="3"/><rect x="13" y="9" width="3" height="3"/><rect x="19" y="13" width="3" height="3"/><rect x="13" y="17" width="3" height="3"/><rect x="7" y="20.5" width="3" height="3"/></g></svg>
<svg style="left:53px;top:135px" width="24" height="24" viewBox="0 0 24 24"><defs><radialGradient id="glb" cx=".35" cy=".3" r=".8"><stop offset="0" stop-color="#28a8e0"/><stop offset=".6" stop-color="#0a4fb0"/><stop offset="1" stop-color="#042a78"/></radialGradient></defs><circle cx="12" cy="12" r="11" fill="url(#glb)"/><path d="M2.5 7C5 3 8 1.5 11 1.5c1 1.5-1 3-2.5 4S6 9 4.5 10 2 9 2.500 7zM13 4c2-1.500 5-1 7 1.500s3 5 2.500 8c-1.500 1-2 4-4.500 5.500-2-1-1-3.500-2-5s-3-1-3.500-3.500S12 6 13 4zM3 13c2 0 4.500 1 5 3s-1 3.500-1 5C4.500 19.500 3 16.500 3 13z" fill="#4fcf1d"/></svg>
<svg style="left:88px;top:135px" width="24" height="24" viewBox="0 0 24 24"><path d="M3 4.500h18l-2 17c0 1-2 2-7 2s-7-1-7-2z" fill="#e9e9e9" stroke="#d4d4d4" stroke-width=".8"/><ellipse cx="12" cy="4.500" rx="9" ry="2.200" fill="#f6f6f6" stroke="#d0d0d0" stroke-width=".8"/><path d="M12 11l2.500 3.500M14.500 17h-4M9.500 13.500l-1.500 3" stroke="#d2d2d2" stroke-width="1.600" fill="none"/></svg>
<!-- tree lines -->
<div class="dotv" style="left:19px;top:176px;height:240px"></div>
<div class="doth" style="left:19px;top:176px;width:11px"></div>
<div class="doth" style="left:25px;top:196px;width:5px"></div>
<div class="doth" style="left:25px;top:216px;width:5px"></div>
<div class="doth" style="left:19px;top:256px;width:11px"></div>
<div class="doth" style="left:19px;top:276px;width:11px"></div>
<div class="doth" style="left:19px;top:296px;width:11px"></div>
<div class="doth" style="left:19px;top:316px;width:11px"></div>
<div class="doth" style="left:25px;top:336px;width:5px"></div>
<div class="doth" style="left:25px;top:356px;width:5px"></div>
<div class="doth" style="left:19px;top:376px;width:11px"></div>
<div class="doth" style="left:19px;top:396px;width:11px"></div>
<div class="doth" style="left:25px;top:416px;width:5px"></div>
<div class="dotv" style="left:38px;top:226px;height:6px"></div>
<div class="doth" style="left:44px;top:236px;width:5px"></div>
<div class="pm plus" style="left:15px;top:192px"></div>
<div class="pm" style="left:15px;top:212px"></div>
<div class="pm plus" style="left:34px;top:232px"></div>
<div class="pm plus" style="left:15px;top:332px"></div>
<div class="pm plus" style="left:15px;top:352px"></div>
<div class="pm plus" style="left:15px;top:412px"></div>
<!-- tree text -->
<div style="left:100px;top:226px;width:66px;height:20px;background:#f0f0f0"></div>
<span class="tree" style="left:51px;top:168px">NC程序</span>
<span class="tree tb" style="left:51px;top:188px">刀具路径</span>
<span class="tree tb" style="left:51px;top:208px">刀具</span>
<span class="tree tb" style="left:103px;top:228px">&gt;</span><span class="tree tb" style="left:115px;top:228px;letter-spacing:.35px">D26R0.8</span>
<span class="tree" style="left:51px;top:248px">边界</span>
<span class="tree" style="left:51px;top:268px">参考线</span>
<span class="tree" style="left:51px;top:288px">特征设置</span>
<span class="tree" style="left:51px;top:308px">用户坐标系</span>
<span class="tree" style="left:51px;top:328px">层和组合</span>
<span class="tree" style="left:51px;top:348px">模型</span>
<span class="tree" style="left:51px;top:368px">残留模型</span>
<span class="tree" style="left:51px;top:388px">组</span>
<span class="tree" style="left:51px;top:408px">宏</span>
<!-- tree icons 16x16 -->
<svg style="left:30px;top:167px" width="17" height="17" viewBox="0 0 17 17"><g stroke="#3d7f96" stroke-width=".7"><path d="M7 1.500l9-1.500v10.500l-9 2z" fill="#bfe6f2"/><path d="M5 3l9-1.500v10.500l-9 2z" fill="#c9ecf6"/><path d="M3 4.500l9-1.500v10.500l-9 2z" fill="#d3f0f8"/><path d="M1 6l9-1.500v10.500l-3 .7-1-1-2 1.500-3 .5z" fill="#9fd6e8"/></g><g fill="#2a6f88"><rect x="2.500" y="7.500" width="1.500" height="1.500"/><rect x="5.500" y="7" width="1.500" height="1.500"/><rect x="2.500" y="10.500" width="1.500" height="1.500"/><rect x="5.500" y="10" width="1.500" height="1.500"/><rect x="4" y="12.500" width="1.500" height="1.500"/></g></svg>
<svg style="left:30px;top:188px" width="16" height="16" viewBox="0 0 24 24"><path d="M13.500 3l8 8-3.500 3.500-9.500-9.500-3.500 3.500 9.500 9.500-3.500 3.500-9-9" fill="none" stroke="#10c814" stroke-width="3.400" stroke-linejoin="miter"/></svg>
<svg style="left:30px;top:207px" width="17" height="17" viewBox="0 0 17 17"><defs><linearGradient id="tl" x1="0" x2="1"><stop offset="0" stop-color="#c89a10"/><stop offset=".4" stop-color="#f8d850"/><stop offset="1" stop-color="#b88808"/></linearGradient><linearGradient id="tg" x1="0" x2="1"><stop offset="0" stop-color="#8a8a8a"/><stop offset=".4" stop-color="#e8e8e8"/><stop offset="1" stop-color="#777"/></linearGradient></defs><rect x="10.500" y="3" width="4" height="8" rx="1.500" fill="url(#tl)"/><rect x="9.500" y=".5" width="6" height="3" fill="url(#tg)"/><rect x="6" y="6" width="4" height="8" rx="1.500" fill="url(#tl)"/><rect x="5" y="3.500" width="6" height="3" fill="url(#tg)"/><rect x="1.500" y="8.500" width="4" height="8" rx="1.500" fill="url(#tl)"/><rect x=".5" y="6" width="6" height="3" fill="url(#tg)"/></svg>
<svg style="left:68px;top:231px" width="9" height="14" viewBox="0 0 9 14"><circle cx="4.500" cy="4.500" r="4" fill="#b8b8b8"/><circle cx="3.500" cy="3.500" r="2" fill="#d8d8d8"/><path d="M2.500 7.500h4l-.5 3h-3z" fill="#a8a8a8"/><rect x="3" y="10.500" width="3" height="2.500" fill="#6a2a1a"/></svg>
<svg style="left:83px;top:227px" width="13" height="18" viewBox="0 0 13 18"><defs><linearGradient id="tcy" x1="0" x2="1"><stop offset="0" stop-color="#e8b820"/><stop offset=".25" stop-color="#fff2b0"/><stop offset=".5" stop-color="#fffbe8"/><stop offset=".8" stop-color="#f0d060"/><stop offset="1" stop-color="#c89810"/></linearGradient></defs><path d="M.7.700h11.600v12.300c0 2.500-2 3.800-5.800 3.800S.700 15.500.700 13z" fill="url(#tcy)" stroke="#c8a018" stroke-width="1"/><path d="M1.500 13.500c2 .8 8 .8 10 0" stroke="#d8b030" fill="none" stroke-width=".8"/></svg>
<svg style="left:30px;top:247px" width="16" height="16" viewBox="0 0 16 16"><path d="M3 3.500C5 1 7 3.500 9 2.500s5-1.500 5.500 2-1 6-3.500 7.500-4 3-6.500 2.500S1 11.500 1.500 8.500 1.500 5.500 3 3.500z" fill="none" stroke="#2aa6cc" stroke-width="1.700"/></svg>
<svg style="left:30px;top:267px" width="17" height="16" viewBox="0 0 17 16"><g fill="none" stroke="#5aa0ae" stroke-width="1"><path d="M2 4c2-1 3 1 4 3s3 3 6 2 3-4 4-6M1.500 13c2 1 3.500-1 4.500-2.500s2-3.500 4-5 4-3 6-3.500M3.500 2.500c1.500.5 2.500 2 3.500 4M1 11.500c1.500-.5 3-2 4.500-4M11 11l3 2.500M9.500 12l3 2.500M12.500 9.500l3 2.500"/></g><path d="M4 5l4 4-4 5 5-3 5 2-4-5 4-6-5 4z" fill="#d6eef2" stroke="#5aa0ae" stroke-width=".8"/></svg>
<svg style="left:30px;top:287px" width="17" height="17" viewBox="0 0 17 17"><defs><radialGradient id="fs" cx=".35" cy=".3" r=".8"><stop offset="0" stop-color="#ffe9a0"/><stop offset="1" stop-color="#c89820"/></radialGradient><linearGradient id="fc" x1="0" y1="0" x2="1" y2="1"><stop offset="0" stop-color="#ffe48a"/><stop offset="1" stop-color="#c09018"/></linearGradient></defs><circle cx="11.500" cy="5" r="4.500" fill="url(#fs)" stroke="#9a7410" stroke-width=".7"/><path d="M6 9l4-6 3 7z" fill="#e0b030" stroke="#9a7410" stroke-width=".6"/><rect x="1" y="8.500" width="8" height="7.500" fill="url(#fc)" stroke="#8a6a10" stroke-width=".8"/></svg>
<svg style="left:30px;top:307px" width="17" height="17" viewBox="0 0 17 17"><g fill="none" stroke="#7ab0bc" stroke-width="1"><path d="M1.500 15.500L13 3M3.500 15l11-9M2 13l3-11M4 13.500L7 3M6 12l3.500-8M2.500 15.500l12-3M5 13.500l11-2.500"/></g><path d="M1.500 15.500L11 5" stroke="#3d6f7c" stroke-width="1.300"/><path d="M11.500 1.500l1 3.500-3-1z M15.500 11l-3 1.500.5-3z" fill="#8cc0cc"/></svg>
<svg style="left:30px;top:327px" width="17" height="17" viewBox="0 0 17 17"><g stroke="#3a6a78" stroke-width=".8" stroke-linejoin="round"><path d="M1 12.500l9-4 6 2.500-9 4.500z" fill="#8fd6e8"/><path d="M1 9l9-4 6 2.500-9 4.500z" fill="#f6f060"/><path d="M1 5.500l9-4 6 2.500-9 4.500z" fill="#9fdcec"/></g></svg>
<svg style="left:30px;top:347px" width="17" height="17" viewBox="0 0 17 17"><g stroke="#0a4a5c" stroke-width=".8" stroke-linejoin="round"><path d="M1 4.500l5-2.500h8l2 2v7l-6 4-8-3z" fill="#1490ac"/><path d="M1 4.500l5-2.500h8l-4 2.500z" fill="#38b8d0"/><path d="M10 4.500l6-0.500v7l-6 4z" fill="#0a7088"/><path d="M3 6.500h5v4h-5zM8 8.500h3" fill="#1aa0bc"/></g></svg>
<svg style="left:30px;top:367px" width="17" height="17" viewBox="0 0 17 17"><g stroke="#8a0a8a" stroke-width=".6" stroke-linejoin="round"><path d="M1 12.500l7-2.500 8 2.500-7.500 3.500z" fill="#e830e8"/><path d="M1 11l7-2.500 8 2.500v1.500l-7.500 3.500-7.500-3.500z" fill="#d020d0"/><path d="M3 9l5-2 6 2v1.500l-5.500 2.500-5.500-2.500z" fill="#e030e0"/><path d="M5 6.500l3.500-1.500 4 1.500v1.500l-4 2-3.500-2z" fill="#e838e8"/><path d="M6.500 4l2-1 2.500 1v1.500l-2.500 1.500-2-1.500z" fill="#f048f0"/><ellipse cx="8.500" cy="2.500" rx="2" ry="1.500" fill="#f868f8"/></g></svg>
<svg style="left:30px;top:387px" width="17" height="17" viewBox="0 0 17 17"><path d="M7 3.500l8-2-2 9-8 2.500z" fill="#a8dce0"/><path d="M5 5l8-2-2 9-8 2.500z" fill="#b8e6e8"/><path d="M3 6.500l8-2-2 9-8 2.500z" fill="#c8eef0"/></svg>
<svg style="left:30px;top:408px" width="17" height="14" viewBox="0 0 17 14"><rect x=".5" y="1" width="16" height="11" rx="1" fill="#2a7a90" stroke="#143844" stroke-width="1"/><rect x="2" y="2.500" width="13" height="4" fill="#9ad0e0"/><circle cx="5" cy="4.500" r="1.300" fill="#143844"/><circle cx="12" cy="4.500" r="1.300" fill="#143844"/><rect x="7.500" y="3.500" width="2" height="2" fill="#e8e020"/><path d="M3 9.500h11" stroke="#9ad0e0" stroke-width="1.500" stroke-dasharray="1.500 1"/></svg>
<div id="vp" style="left:289px;top:107px;width:1109px;height:674px;background:#808080"></div>
<div id="vpbg" style="left:290px;top:108px;width:1107px;height:672px;background:linear-gradient(#2e465a 0%,#000 100%)"></div>
<svg id="model" style="left:0;top:0" width="1435" height="853" viewBox="0 0 1435 853">
<defs><pattern id="hatr" width="2.400" height="6" patternUnits="userSpaceOnUse" patternTransform="skewX(28)"><rect x="0" y="0" width="1" height="6" fill="#007000"/></pattern><pattern id="hatl" width="2.400" height="6" patternUnits="userSpaceOnUse" patternTransform="skewX(-28)"><rect x="0" y="0" width="1" height="6" fill="#007000"/></pattern>
<linearGradient id="hole" x1="0" x2="1"><stop offset="0" stop-color="#056a52"/><stop offset=".45" stop-color="#00624b"/><stop offset=".7" stop-color="#005a44"/><stop offset="1" stop-color="#00694f"/></linearGradient>
<linearGradient id="cyl" x1="0" x2="1"><stop offset="0" stop-color="#2aae88"/><stop offset=".5" stop-color="#078a66"/><stop offset="1" stop-color="#2aae88"/></linearGradient>
<linearGradient id="cylw" x1="0" x2="1"><stop offset="0" stop-color="#00674f"/><stop offset=".5" stop-color="#005c46"/><stop offset="1" stop-color="#00674f"/></linearGradient>
</defs>
<path d="M864.0 296.5 C868.0 296.5 871.7 296.6 876.0 297.2 C880.3 297.8 885.0 298.5 890.0 300.0 C895.0 301.5 899.2 302.6 906.0 306.0 C912.8 309.4 922.5 315.5 930.8 320.2 C939.1 324.9 947.3 329.7 955.6 334.4 C963.9 339.1 972.1 343.9 980.4 348.6 C988.7 353.3 996.9 358.1 1005.2 362.8 C1013.5 367.5 1023.9 373.0 1030.0 377.0 C1036.1 381.0 1038.7 383.3 1042.0 387.0 C1045.3 390.7 1048.2 394.3 1050.0 399.0 C1051.8 403.7 1052.1 409.8 1053.0 415.0 C1053.9 420.2 1054.6 423.5 1055.6 430.0 C1056.6 436.5 1057.8 446.0 1059.0 454.0 C1060.2 462.0 1061.9 470.3 1063.0 478.0 C1064.1 485.7 1065.1 492.2 1065.6 500.0 C1066.1 507.8 1066.1 516.7 1066.2 525.0 C1066.3 533.3 1066.2 541.8 1066.0 550.0 C1065.8 558.2 1065.8 568.5 1065.0 574.0 C1064.2 579.5 1063.7 579.7 1061.5 583.0 C1059.3 586.3 1055.9 590.5 1052.0 594.0 C1048.1 597.5 1045.1 599.6 1038.0 604.0 C1030.9 608.4 1019.1 614.9 1009.7 620.3 C1000.2 625.8 990.8 631.2 981.3 636.7 C971.9 642.1 962.4 647.6 953.0 653.0 C943.6 658.4 934.1 663.9 924.7 669.3 C915.2 674.8 905.8 680.2 896.3 685.7 C886.9 691.1 875.7 698.3 868.0 702.0 C860.3 705.7 856.7 706.2 850.0 708.0 C843.3 709.8 835.7 711.8 828.0 712.6 C820.3 713.4 811.3 713.4 804.0 713.0 C796.7 712.6 790.3 711.7 784.0 710.0 C777.7 708.3 773.4 706.7 766.0 703.0 C758.6 699.3 748.4 692.9 739.6 687.8 C730.8 682.7 722.0 677.7 713.2 672.6 C704.4 667.5 695.6 662.5 686.8 657.4 C678.0 652.3 669.2 647.3 660.4 642.2 C651.6 637.1 640.9 631.9 634.0 627.0 C627.1 622.1 622.3 617.5 619.0 613.0 C615.7 608.5 615.1 607.2 614.2 600.0 C613.3 592.8 613.7 578.3 613.6 570.0 C613.5 561.7 613.6 558.3 613.8 550.0 C614.0 541.7 614.0 531.7 615.0 520.0 C616.0 508.3 618.3 491.7 620.0 480.0 C621.7 468.3 623.7 457.8 625.0 450.0 C626.3 442.2 626.8 437.8 628.0 433.0 C629.2 428.2 630.0 424.7 632.0 421.0 C634.0 417.3 636.7 414.2 640.0 411.0 C643.3 407.8 645.2 406.2 652.0 402.0 C658.8 397.8 671.3 391.1 681.0 385.7 C690.7 380.2 700.3 374.8 710.0 369.3 C719.7 363.9 729.3 358.4 739.0 353.0 C748.7 347.6 758.3 342.1 768.0 336.7 C777.7 331.2 787.3 325.8 797.0 320.3 C806.7 314.9 818.8 307.6 826.0 304.0 C833.2 300.4 835.7 300.2 840.0 299.0 C844.3 297.8 848.0 297.4 852.0 297.0 C856.0 296.6 860.0 296.5 864.0 296.5Z" fill="#00ff00"/>
<polygon points="673.8,430.0 669.0,464.0 680.0,470.0 707.8,484.8 735.5,499.5 763.2,514.2 791.0,529.0 802.0,531.5 814.0,532.3 827.0,531.5 839.0,529.0 873.4,510.4 907.8,491.8 942.2,473.2 976.6,454.6 1011.0,436.0 1006.5,408.0 998.0,419.0 945.0,449.2 892.0,479.4 839.0,509.6 824.0,514.0 806.0,514.3 791.0,510.0 683.0,448.0 675.0,439.5" fill="#00664e"/>
<polygon points="791,510 799,513 806,514.3 824,514 839,509.6 839,529 827,531.5 814,532.3 802,531.5 791,529" fill="url(#cylw)"/>
<polygon points="669.0,464.0 680.0,470.0 707.8,484.8 735.5,499.5 763.2,514.2 791.0,529.0 789.0,538.0 761.2,523.2 733.5,508.5 705.8,493.8 678.0,479.0 667.0,473.0" fill="url(#hatl)"/>
<polygon points="839.0,529.0 873.4,510.4 907.8,491.8 942.2,473.2 976.6,454.6 1011.0,436.0 1013.0,445.0 978.6,463.6 944.2,482.2 909.8,500.8 875.4,519.4 841.0,538.0" fill="url(#hatr)"/>
<path d="M791.0 539.5 Q815 527.5 839.0 539.5" fill="none" stroke="#006c00" stroke-width="0.8"/>
<path d="M797.0 541.5 Q815 532.5 833.0 541.5" fill="none" stroke="#006c00" stroke-width="0.8"/>
<path d="M803.5 543.0 Q815 538.0 826.5 543.0" fill="none" stroke="#006c00" stroke-width="0.8"/>
<polygon points="686.0,418.0 678.0,424.0 674.0,431.0 675.0,439.5 683.0,448.0 710.0,463.5 737.0,479.0 764.0,494.5 791.0,510.0 799.0,513.0 806.0,514.3 824.0,514.0 839.0,509.6 870.8,491.5 902.6,473.4 934.4,455.2 966.2,437.1 998.0,419.0 1004.0,413.0 1006.5,406.0 1005.0,399.0 997.0,392.0 995.0,390.5 998.6,396.0 998.8,401.0 996.5,406.5 990.0,412.0 836.0,501.5 828.0,504.8 820.0,506.0 806.0,505.6 795.0,502.0 688.0,440.0 683.0,434.5 681.0,429.0 682.0,423.0" fill="#22a882"/>
<polygon points="795,502 806,505.6 820,506 836,501.5 839,509.6 824,514 806,514.3 791,510" fill="url(#cyl)"/>
<path d="M686.0 418.0 C684.7 419.0 680.0 421.8 678.0 424.0 C676.0 426.2 674.5 428.4 674.0 431.0 C673.5 433.6 673.5 436.7 675.0 439.5 C676.5 442.3 677.2 444.0 683.0 448.0 C688.8 452.0 701.0 458.3 710.0 463.5 C719.0 468.7 728.0 473.8 737.0 479.0 C746.0 484.2 755.0 489.3 764.0 494.5 C773.0 499.7 785.2 506.9 791.0 510.0 C796.8 513.1 796.5 512.3 799.0 513.0 C801.5 513.7 801.8 514.1 806.0 514.3 C810.2 514.5 818.5 514.8 824.0 514.0 C829.5 513.2 831.2 513.4 839.0 509.6 C846.8 505.8 860.2 497.5 870.8 491.5 C881.4 485.4 892.0 479.4 902.6 473.4 C913.2 467.3 923.8 461.3 934.4 455.2 C945.0 449.2 955.6 443.2 966.2 437.1 C976.8 431.1 991.7 423.0 998.0 419.0 C1004.3 415.0 1002.6 415.2 1004.0 413.0 C1005.4 410.8 1006.3 408.3 1006.5 406.0 C1006.7 403.7 1006.6 401.3 1005.0 399.0 C1003.4 396.7 998.3 393.2 997.0 392.0" fill="none" stroke="#000" stroke-width="1"/>
<path d="M673.8 432 L669 464 M1006.5 408 L1011 436" fill="none" stroke="#003d2e" stroke-width="0.8"/>
<path d="M683 448 L680 470 M791 510 L791 529 M839 509.6 L839 529 M998 419 L1000.5 442 M688 440 L683 448 M795 502 L791 510 M836 501.5 L839 509.6 M990 412 L998 419" fill="none" stroke="#000" stroke-width="1"/>
<path d="M686.0 418.0 C692.0 414.1 707.3 405.6 718.0 399.4 C728.7 393.2 739.3 387.0 750.0 380.8 C760.7 374.6 771.3 368.4 782.0 362.2 C792.7 356.0 803.3 349.8 814.0 343.6 C824.7 337.4 838.8 328.5 846.0 325.0 C853.2 321.5 853.7 322.9 857.0 322.4 C860.3 321.9 862.8 321.8 866.0 322.0 C869.2 322.2 872.0 322.2 876.0 323.4 C880.0 324.6 883.3 325.5 890.0 329.0 C896.7 332.5 907.5 339.2 916.2 344.4 C925.0 349.5 933.8 354.6 942.5 359.8 C951.2 364.9 960.0 370.0 968.8 375.1 C977.5 380.2 990.0 387.0 995.0 390.5 C1000.0 394.0 998.0 394.2 998.6 396.0 C999.2 397.8 999.1 399.2 998.8 401.0 C998.4 402.8 998.0 404.7 996.5 406.5 C995.0 408.3 996.2 408.1 990.0 412.0 C983.8 415.9 969.5 423.9 959.2 429.9 C948.9 435.9 938.7 441.8 928.4 447.8 C918.1 453.8 907.9 459.7 897.6 465.7 C887.3 471.7 877.1 477.6 866.8 483.6 C856.5 489.6 842.5 498.0 836.0 501.5 C829.5 505.0 830.7 504.1 828.0 504.8 C825.3 505.6 823.7 505.9 820.0 506.0 C816.3 506.1 810.2 506.3 806.0 505.6 C801.8 504.9 801.3 505.2 795.0 502.0 C788.7 498.8 777.2 491.7 768.2 486.5 C759.3 481.3 750.4 476.2 741.5 471.0 C732.6 465.8 723.7 460.7 714.8 455.5 C705.8 450.3 693.3 443.5 688.0 440.0 C682.7 436.5 684.2 436.3 683.0 434.5 C681.8 432.7 681.2 430.9 681.0 429.0 C680.8 427.1 681.2 424.8 682.0 423.0 C682.8 421.2 680.0 421.9 686.0 418.0Z" fill="#8073a0" stroke="#000" stroke-width="1.1"/>
<ellipse cx="791" cy="442" rx="35" ry="20" fill="url(#hole)" stroke="#000" stroke-width="1.1"/>
<ellipse cx="888.5" cy="385.5" rx="34.5" ry="19.5" fill="url(#hole)" stroke="#000" stroke-width="1.1"/>
<path d="M783 460.5 Q791 462.5 800 460.5" fill="none" stroke="#9fd6c4" stroke-width="1"/>
<path d="M878 403.5 Q888 405.5 898 403.5" fill="none" stroke="#9fd6c4" stroke-width="1"/>
<line x1="1040.5" y1="330" x2="1040.5" y2="607" stroke="#ff2020" stroke-width="1" stroke-dasharray="5 3"/>
<line x1="1042.5" y1="312" x2="1042.5" y2="424" stroke="#19e0f0" stroke-width="1.2"/>
<circle cx="1042.5" cy="311.5" r="4.2" fill="none" stroke="#e8e8e8" stroke-width="1"/>
<path d="M1029 425.5 Q1035 422.5 1042 424" fill="none" stroke="#e08a00" stroke-width="1"/>
<path d="M1040 603 Q1036 606 1041 610" fill="none" stroke="#e08a00" stroke-width="1"/>
<g stroke="#fff" fill="none" stroke-width="1.6"><line x1="326.5" y1="744" x2="327.2" y2="716"/><path d="M327.3 713 L324 722 L327.3 720 L330.6 722Z" stroke-width="1"/></g>
<g stroke="#c8c8c8" fill="none" stroke-width="1"><path d="M326 744 L301 731 M326 744 L350 731 M299.5 730.3 L308 730.5 L305.5 736.5Z M351 730.3 L342.5 730.5 L345 736.5Z"/></g>
<text x="331" y="709.5" font-size="11.5" font-weight="bold" fill="#fff" font-family="Liberation Sans, sans-serif">Z</text>
<text x="304" y="726" font-size="11.5" font-weight="bold" fill="#c8c8c8" font-family="Liberation Sans, sans-serif">Y</text>
<text x="355" y="726" font-size="11.5" font-weight="bold" fill="#c8c8c8" font-family="Liberation Sans, sans-serif">X</text>
</svg>
<div style="left:1398px;top:781px;width:29px;height:1px;background:#a0a0a0"></div>
<svg class="ic" style="left:1401.5px;top:110.5px;width:22px;height:22px" viewBox="0 0 24 24"><path d="M3 8.500l6-5.500h13v13l-6 5.500h-13z" fill="#fff" stroke="none"/><path d="M9 3v13h13M9 16l-6 5.500" fill="none" stroke="#999" stroke-width=".7"/><path d="M3 8.500l6-5.500h13l-6 5.500z" fill="url(#glass)"/><path d="M3 8.500l6-5.500h13v13l-6 5.500h-13zM3 8.500h13v13M16 8.500l6-5.500" fill="none" stroke="#444" stroke-width=".9"/></svg>
<svg class="ic" style="left:1401.5px;top:134.5px;width:22px;height:22px" viewBox="0 0 24 24"><path d="M3 8.500l6-5.500h13v13l-6 5.500h-13z" fill="#fff" stroke="none"/><path d="M9 3v13h13M9 16l-6 5.500" fill="none" stroke="#999" stroke-width=".7"/><path d="M16 8.500l6-5.500v13l-6 5.500z" fill="url(#glass)"/><path d="M3 8.500l6-5.500h13v13l-6 5.500h-13zM3 8.500h13v13M16 8.500l6-5.500" fill="none" stroke="#444" stroke-width=".9"/></svg>
<svg class="ic" style="left:1401.5px;top:158.5px;width:22px;height:22px" viewBox="0 0 24 24"><path d="M3 8.500l6-5.500h13v13l-6 5.500h-13z" fill="#fff" stroke="none"/><path d="M9 3v13h13M9 16l-6 5.500" fill="none" stroke="#999" stroke-width=".7"/><path d="M3 8.500h13v13h-13z" fill="url(#glass)"/><path d="M3 8.500l6-5.500h13v13l-6 5.500h-13zM3 8.500h13v13M16 8.500l6-5.500" fill="none" stroke="#444" stroke-width=".9"/></svg>
<svg class="ic" style="left:1401.5px;top:182.0px;width:22px;height:22px" viewBox="0 0 24 24"><path d="M3 6.500l9-3.500 9 3.500v10l-9 5-9-5z" fill="#7ccce8" stroke="#14688c" stroke-width="1"/><path d="M3 6.500l9 4 9-4-9-3.500z" fill="#c4ecf8" stroke="#14688c" stroke-width=".8"/><path d="M12 10.500v11" stroke="#14688c" stroke-width=".8"/><path d="M12 10.500l9-4v10l-9 5z" fill="#48b0d8"/><path d="M7 5.500l5 5 5-5z" fill="#f01818"/></svg>
<svg class="ic" style="left:1401.5px;top:207.0px;width:22px;height:22px" viewBox="0 0 24 24"><path d="M15 15l6 6" stroke="#e8a030" stroke-width="3.400" stroke-linecap="round"/><path d="M14 14l3 3" stroke="#888" stroke-width="2"/><circle cx="10" cy="10" r="7.500" fill="#f4f8fc" stroke="#8a98b0" stroke-width="1.800"/><path d="M6.500 7l-1 4.500 4.500-.5-1.500-1.200c1.500-1.500 4-1 4.500 1s-1 3.500-3 3.500v1.500c3 0 5-2.500 4.500-5.500s-4.500-4.500-7-2z" fill="#d8a010" stroke="#8a6a08" stroke-width=".4"/></svg>
<svg class="ic" style="left:1401.5px;top:231.0px;width:22px;height:22px" viewBox="0 0 24 24"><path d="M3 2h14l4 4v16h-18z" fill="#e8f0fc" stroke="#4060c0" stroke-width="1.200"/><path d="M17 2v4h4" fill="#fff" stroke="#4060c0" stroke-width=".8"/><path d="M6.500 11a5.500 5.500 0 0 1 9.500-3l1.500-1.500.5 5.500-5.500-.5 1.500-1.500a3.500 3.500 0 0 0-5 1zM17.500 13.500a5.500 5.500 0 0 1-9.500 3l-1.500 1.500-.5-5.500 5.500.5-1.500 1.500a3.500 3.500 0 0 0 5-1z" fill="#18a828"/></svg>
<svg class="ic" style="left:1401.5px;top:255.5px;width:22px;height:22px" viewBox="0 0 24 24"><path d="M15 15l5.500 5.500" stroke="#e8c020" stroke-width="3.400" stroke-linecap="round"/><circle cx="9.500" cy="9.500" r="7.500" fill="#f4fafc" stroke="#1a88a8" stroke-width="1.800"/><path d="M5 5l9 9M14 5l-9 9" stroke="#000" stroke-width="2"/><path d="M3.500 3.500h4.500l-4.500 4.500zM15.500 3.500v4.500l-4.500-4.500zM3.500 15.500v-4.500l4.500 4.500zM15.500 15.500h-4.500l4.500-4.500z" fill="#000"/></svg>
<svg class="ic" style="left:1401.5px;top:280.0px;width:22px;height:22px" viewBox="0 0 24 24"><path d="M15 15l5.500 5.500" stroke="#e8c020" stroke-width="3.400" stroke-linecap="round"/><circle cx="9.500" cy="9.500" r="7.500" fill="#f4fafc" stroke="#1a88a8" stroke-width="1.800"/><rect x="5.500" y="5.500" width="8" height="8" fill="#fff" stroke="#000" stroke-width="2"/></svg>
<svg class="ic" style="left:1401.5px;top:311.5px;width:22px;height:22px" viewBox="0 0 24 24"><path d="M2 8l12-4 8 3.500v8l-12 5-8-4.500z" fill="#90d4ec" stroke="#14688c" stroke-width="1"/><path d="M2 8l8 4v8.500l-8-4.500z" fill="#2894c0"/><path d="M2 8l8 4 12-4.500M10 12v8.500" fill="none" stroke="#14688c" stroke-width="1"/><path d="M2 8l12-4 8 3.500-12 4.500z" fill="#c0e8f6" stroke="#14688c" stroke-width=".8"/></svg>
<div style="left:1421px;top:127px;width:0;height:0;border-left:4px solid transparent;border-bottom:4px solid #000"></div>
<div style="left:1421px;top:151px;width:0;height:0;border-left:4px solid transparent;border-bottom:4px solid #000"></div>
<div style="left:1421px;top:175px;width:0;height:0;border-left:4px solid transparent;border-bottom:4px solid #000"></div>
<div style="left:1421px;top:199px;width:0;height:0;border-left:4px solid transparent;border-bottom:4px solid #000"></div>
<div style="left:1421px;top:272px;width:0;height:0;border-left:4px solid transparent;border-bottom:4px solid #000"></div>
<div class="seph" style="left:1401px;top:305px;width:23px"></div>
<div class="seph" style="left:1401px;top:338px;width:23px"></div>
<div class="seph" style="left:1401px;top:402px;width:23px"></div>
<div class="pressed" style="left:1401px;top:345px;width:24px;height:22px"></div>
<svg class="ic" style="left:1402.5px;top:346.0px;width:20px;height:20px" viewBox="0 0 24 24"><defs><radialGradient id="shl" cx=".35" cy=".3" r=".75"><stop offset="0" stop-color="#fff" stop-opacity=".55"/><stop offset=".5" stop-color="#fff" stop-opacity="0"/><stop offset="1" stop-color="#000" stop-opacity=".35"/></radialGradient><clipPath id="shc"><circle cx="12" cy="12" r="9.500"/></clipPath></defs><g clip-path="url(#shc)"><rect x="0" y="0" width="24" height="24" fill="#e81818"/><path d="M0 0h14c0 5-3 7-6 8s-5 3-8 3z" fill="#18d028"/><path d="M14 0h10v24h-10c4-4 6-7 3-12s-4-7-3-12z" fill="#1838e0"/><path d="M4 24c2-4 6-5 10-5s6 2 7 5z" fill="#e81818"/></g><circle cx="12" cy="12" r="9.500" fill="url(#shl)" stroke="#222" stroke-width=".6"/></svg>
<div style="left:1420px;top:362px;width:0;height:0;border-left:4px solid transparent;border-bottom:4px solid #000"></div>
<svg class="ic" style="left:1401.5px;top:368.0px;width:22px;height:22px" viewBox="0 0 24 24"><g fill="none" stroke="#555" stroke-width=".9"><circle cx="12" cy="12" r="8.500"/><ellipse cx="12" cy="12" rx="4" ry="8.500"/><path d="M12 3.500v17M3.500 12h17M4.500 8h15M4.500 16h15"/></g></svg>
<svg class="ic" style="left:1401.5px;top:409.5px;width:22px;height:22px" viewBox="0 0 24 24"><rect x="3" y="6" width="18" height="14" fill="#fffbe8" stroke="#c89818" stroke-width="1.200"/><path d="M10 2v15l3.500-3 2.500 6 2.500-1-2.500-6h4.500z" fill="#fff" stroke="#000" stroke-width="1"/></svg>
<div style="left:1420px;top:426px;width:0;height:0;border-left:4px solid transparent;border-bottom:4px solid #000"></div>
<svg class="ic" style="left:1402.0px;top:438.5px;width:22px;height:22px" viewBox="0 0 24 24"><path d="M2 6v14l3.500-3 2.500 5.500 2.500-1-2.500-5.500h4.500z" fill="#fff" stroke="#222" stroke-width="1"/><path d="M11 7l-1.500 5.500 5.500-.5-1.800-1.500c2-2 5-1 5.500 1.500s-1.500 4.500-4 4.500v2.500c4 0 7-3 6.500-7s-6-6-9-3z" fill="#d8a010" stroke="#8a6a08" stroke-width=".4"/></svg>
<div class="cls" style="left:1401px;top:470px;width:15px;height:14px"></div>
<div style="left:1401px;top:486px;width:26px;height:1px;background:#a0a0a0"></div>
<div style="left:4px;top:781px;width:285px;height:1px;background:#fff"></div>
<div class="wbg" style="left:7px;top:784px;width:45px;height:26px"></div>
<div style="left:9px;top:786px;width:24px;height:22px;background:#f0f0f0"></div>
<svg class="ic" style="left:9.0px;top:785.5px;width:24px;height:24px" viewBox="0 0 24 24"><path d="M3.500 2.500h17v14q0 5-8.500 5t-8.500-5z" fill="url(#ycyl)" stroke="#b88810" stroke-width=".8"/><path d="M3.500 17.500q4 2 8.500 2t8.500-2" fill="none" stroke="#d0a020" stroke-width=".8"/><path d="M6.500 2v9M2 6.500h9M3.500 3.500l6 6M9.500 3.500l-6 6" stroke="#f01010" stroke-width="1.100" stroke-dasharray="2 1.200"/></svg>
<div class="arr" style="left:41px;top:796px"></div>
<svg class="ic" style="left:59.5px;top:785.5px;width:23px;height:23px" viewBox="0 0 24 24"><rect x="2.500" y="3" width="6" height="19" fill="#f0e060" stroke="#000" stroke-width="1"/><rect x="8.500" y="3" width="6.500" height="19" fill="#60c060" stroke="#000" stroke-width="1"/><rect x="15" y="3" width="6.500" height="19" fill="#a8a8f0" stroke="#000" stroke-width="1"/><path d="M3.500 18h4M9.500 18h4.500M16 18h4.500" stroke="#000" stroke-width="1"/><g transform="rotate(-42 12 11)"><rect x="9" y="-1" width="6" height="7" fill="#555" stroke="#000" stroke-width=".7"/><rect x="8.500" y="6" width="7" height="14" fill="url(#ycyl)" stroke="#000" stroke-width=".8"/></g></svg>
<div class="combo" style="left:92px;top:786px;width:121px;height:23px;font-size:12px">D26R0.8</div>
<div class="sepv" style="left:220px;top:785px;height:24px"></div>
<div class="sepv" style="left:255px;top:785px;height:24px"></div>
<div class="sepv" style="left:340px;top:785px;height:24px"></div>
<svg class="ic" style="left:262.5px;top:786.0px;width:23px;height:23px" viewBox="0 0 24 24"><path d="M5 20v-15M5 20h15" stroke="#1a88a8" stroke-width="1.800"/><path d="M5 20l9-9" stroke="#f01010" stroke-width="1.600"/><path d="M5 1.500l-3 4.500h6zM23 20l-4.500-3v6z" fill="#1a88a8"/><circle cx="5" cy="20" r="3.200" fill="url(#ball)" stroke="#0c4a64" stroke-width=".5"/><g transform="rotate(48 16 8)"><path d="M13.500 5h5v9h-5z" fill="#fff8d8" stroke="#222" stroke-width=".7"/><path d="M12.500 -1h7v4l-1 2h-5l-1-2z" fill="#f8e48a" stroke="#222" stroke-width=".7"/></g></svg>
<svg class="ic" style="left:287.5px;top:786.0px;width:23px;height:23px" viewBox="0 0 24 24"><path d="M9 6.500a7 7 0 0 0 0 14z" fill="#18d028"/><path d="M9 6.500a7 7 0 0 1 0 14z" fill="#f01818"/><path d="M9 2.500v20" stroke="#1818f0" stroke-width="1.400"/><g transform="rotate(48 17 7)"><path d="M14.500 4h5v8h-5z" fill="#fff8d8" stroke="#222" stroke-width=".7"/><path d="M13.500 -2h7v4l-1 2h-5l-1-2z" fill="#f8e48a" stroke="#222" stroke-width=".7"/></g></svg>
<svg class="ic" style="left:312.5px;top:786.0px;width:23px;height:23px" viewBox="0 0 24 24"><path d="M9 6.500a7 7 0 0 0 0 14z" fill="#18d028"/><path d="M9 6.500a7 7 0 0 1 0 14z" fill="#f01818"/><path d="M2.500 7l3 3M12 18.500l3 3" stroke="#1818f0" stroke-width="1.400"/><g transform="rotate(48 17 7)"><path d="M14.500 4h5v8h-5z" fill="#fff8d8" stroke="#222" stroke-width=".7"/><path d="M13.500 -2h7v4l-1 2h-5l-1-2z" fill="#f8e48a" stroke="#222" stroke-width=".7"/></g></svg>
<svg class="ic" style="left:348.0px;top:786.0px;width:23px;height:23px" viewBox="0 0 24 24"><g transform="rotate(42 12 12)"><rect x="8" y="-1" width="8.500" height="12" rx="2" fill="#58c4f0" stroke="#2090c0" stroke-width=".6"/><path d="M8.500 11h7.500l-2 5h-3.500z" fill="#ececec" stroke="#999" stroke-width=".5"/><path d="M10.500 16h3.500l-1.800 4.500z" fill="#111"/></g></svg>
<svg class="ic" style="left:372.0px;top:786.0px;width:23px;height:23px" viewBox="0 0 24 24"><path d="M3.500 5c2-2 4-1 5 1s2.500 4 3.500 4 3-4 4.500-6 4-1 3.500 1.500-4 5-4.500 7 3 5 4.500 7-1 3.500-3 2-4-5.500-5-5.500-3 4-5 5.500-4 0-2.500-2.500 4.500-5 4.500-6.500-3-4-5-5.500-2-1.500-1.500-2z" fill="#9cd8f0" stroke="#1a78a0" stroke-width="1.200"/></svg>
<div class="cls" style="left:404px;top:790px;width:15px;height:14px"></div>
<div style="left:4px;top:812px;width:419px;height:1px;background:#a0a0a0"></div>
<div style="left:422px;top:782px;width:1px;height:31px;background:#a0a0a0"></div>
<div style="left:4px;top:813px;width:419px;height:1px;background:#fff"></div>
<svg class="ic" style="left:7.0px;top:817.5px;width:23px;height:23px" viewBox="0 0 24 24"><path d="M7 19l11 0M7 19L17 9.500M7 19V6" stroke="#3a98c0" stroke-width="1.400" fill="none"/><path d="M21.500 19l-4-2.500v5z" fill="#3a98c0"/><circle cx="7" cy="19" r="2.800" fill="none" stroke="#14506c" stroke-width="1.200"/><path d="M6.500 1.500v9M2 6h9M3.500 3l6 6M9.500 3l-6 6" stroke="#f01010" stroke-width="1.100" stroke-dasharray="2 1.200"/><path d="M23 23h-5l5-5z" fill="#000"/></svg>
<div class="combo" style="left:34px;top:818px;width:88px;height:23px"></div>
<svg class="ic" style="left:127.0px;top:818.0px;width:22px;height:22px" viewBox="0 0 24 24"><path d="M8 11.500l7-3 8 3.500v7l-8 4.500-7-4.500z" fill="#8cd8f0" stroke="#14688c" stroke-width=".8"/><path d="M8 11.500l7 4v8l-7-4.500z" fill="#f4d868" stroke="#14688c" stroke-width=".8"/><path d="M15 15.500l8-3.500v7l-8 4.500z" fill="#58bce0" stroke="#14688c" stroke-width=".8"/><text x="0.500" y="11.500" font-size="14" font-weight="bold" font-family="Liberation Sans, sans-serif" fill="#a8e0f4" stroke="#0c3c54" stroke-width=".9">X</text></svg>
<svg class="ic" style="left:154.0px;top:818.0px;width:22px;height:22px" viewBox="0 0 24 24"><path d="M8 11.500l7-3 8 3.500v7l-8 4.500-7-4.500z" fill="#8cd8f0" stroke="#14688c" stroke-width=".8"/><path d="M8 11.500l7 4v8l-7-4.500z" fill="#f4d868" stroke="#14688c" stroke-width=".8"/><path d="M15 15.500l8-3.500v7l-8 4.500z" fill="#58bce0" stroke="#14688c" stroke-width=".8"/><text x="0.500" y="11.500" font-size="14" font-weight="bold" font-family="Liberation Sans, sans-serif" fill="#a8e0f4" stroke="#0c3c54" stroke-width=".9">Y</text></svg>
<div class="pressed" style="left:180px;top:818px;width:24px;height:22px"></div>
<svg class="ic" style="left:181.0px;top:818.0px;width:22px;height:22px" viewBox="0 0 24 24"><path d="M8 11.500l7-3 8 3.500v7l-8 4.500-7-4.500z" fill="#8cd8f0" stroke="#14688c" stroke-width=".8"/><path d="M8 11.500l7 4v8l-7-4.500z" fill="#f4d868" stroke="#14688c" stroke-width=".8"/><path d="M15 15.500l8-3.500v7l-8 4.500z" fill="#58bce0" stroke="#14688c" stroke-width=".8"/><text x="0.500" y="11.500" font-size="14" font-weight="bold" font-family="Liberation Sans, sans-serif" fill="#a8e0f4" stroke="#0c3c54" stroke-width=".9">Z</text></svg>
<svg class="ic" style="left:218.5px;top:818.5px;width:21px;height:21px" viewBox="0 0 24 24"><path d="M2.500 2v20M6.500 2v20M10.500 2v20M14.500 2v20M18.500 2v20M22 2v20M2 2.500h20M2 6.500h20M2 10.500h20M2 14.500h20M2 18.500h20M2 22h20" stroke="#b0b0b0" stroke-width="1.200"/></svg>
<div class="fld dis" style="left:244.0px;top:818px;width:52.5px">5.0</div>
<div class="fld" style="left:310.5px;top:818px;width:56.0px">8.63999</div>
<div class="fld" style="left:370.5px;top:818px;width:55.5px">225.878</div>
<div class="fld" style="left:431.0px;top:818px;width:55.5px">0</div>
<svg class="ic" style="left:501.5px;top:818.5px;width:21px;height:21px" viewBox="0 0 24 24"><path d="M2 5l7-1.500v16l-7 1.500z" fill="#5a6a7a" stroke="#3a4a5a" stroke-width=".6"/><path d="M3.500 6.500l4.500-1v3l-4.500 1z" fill="#58c8e8"/><path d="M3.500 11l4.500-1v8l-4.500 1z" fill="#48d058"/><path d="M3.500 13.500l4.500-1M3.500 16l4.500-1M5.700 10.500v8" stroke="#2a5a3a" stroke-width=".6"/><rect x="12" y="6" width="4" height="11" rx="1" fill="#1878e0"/><rect x="18" y="6" width="4" height="11" rx="1" fill="#1878e0"/></svg>
<svg class="ic" style="left:536.0px;top:817.5px;width:23px;height:23px" viewBox="0 0 24 24"><path d="M2 3v10M23 3v10M12.500 3v10M2 8h21" stroke="#1a88a8" stroke-width="1.200" fill="none"/><path d="M4.500 5.500v4M7 5.500v4M9.500 5.500v4M15 5.500v4M17.500 5.500v4M20 5.500v4" stroke="#1a88a8" stroke-width="1"/><text x="1" y="22.500" font-size="8.500" font-family="Liberation Sans, sans-serif" fill="#1a88a8" letter-spacing="5.200">012</text></svg>
<div class="fld" style="left:563.5px;top:818px;width:56.0px">mm</div>
<svg class="ic" style="left:623.7px;top:817.5px;width:22px;height:22px" viewBox="0 0 24 24"><circle cx="12" cy="12" r="8.500" fill="none" stroke="#1a88a8" stroke-width="1.300"/><path d="M12 0v24M0 12h24" stroke="#1a88a8" stroke-width="1.300"/></svg>
<div class="fld" style="left:649.5px;top:818px;width:55.5px">0.01</div>
<svg class="ic" style="left:709.5px;top:818.5px;width:21px;height:21px" viewBox="0 0 24 24"><path d="M11.500 2.500h10v11l-2 3h-6l-2-3z" fill="none" stroke="#1a88a8" stroke-width="1.400"/><path d="M2 13.500h8" stroke="#1a88a8" stroke-width="3" stroke-dasharray="1 1"/><path d="M13.500 18.500h6M14 21h5M14.500 23.500h4" stroke="#1a88a8" stroke-width="1.200"/></svg>
<div class="fld" style="left:735.0px;top:818px;width:56.5px">0.0</div>
<svg class="ic" style="left:798.5px;top:818.5px;width:20px;height:20px" viewBox="0 0 24 24"><circle cx="12" cy="12" r="7.500" fill="none" stroke="#1a88a8" stroke-width="1.400"/><path d="M2 22L22 2" stroke="#1a88a8" stroke-width="1.400"/></svg>
<div class="fld" style="left:821.5px;top:818px;width:56.0px">26.0</div>
<svg class="ic" style="left:882.0px;top:819.0px;width:20px;height:20px" viewBox="0 0 24 24"><path d="M22 2L6 17" stroke="#1a88a8" stroke-width="1.400"/><path d="M5 18l2-7 5 5z" fill="#1a88a8"/><path d="M1.500 10c0 7 5 12 12 12" fill="none" stroke="#1a88a8" stroke-width="1.400"/></svg>
<div class="fld" style="left:907.5px;top:818px;width:56.0px">0.8</div>
<div style="left:4px;top:844px;width:1423px;height:1px;background:#a0a0a0"></div>
<div style="left:4px;top:845px;width:1423px;height:1px;background:#fff"></div>
<div style="left:1434px;top:0;width:1px;height:853px;background:#2cc4e4"></div>
<div style="left:0;top:852px;width:1435px;height:1px;background:#2cc4e4"></div>
<!-- Sogou IME bar -->
<div style="left:1314px;top:708px;width:109px;height:26px;background:#fff;border-radius:4px;box-shadow:0 0 1px 0.5px #b0b0b0"></div>
<svg style="left:1314.500px;top:706.500px" width="30" height="28" viewBox="0 0 27 25"><defs><linearGradient id="sg" x1="0" y1="0" x2="0" y2="1"><stop offset="0" stop-color="#f8742a"/><stop offset="1" stop-color="#e03a0c"/></linearGradient></defs><rect x="3.500" y="2" width="20" height="20.500" rx="3" fill="#f4f4f4" stroke="#d8d8d8" stroke-width=".6" transform="rotate(-13 13.500 12.500)"/><rect x="4.500" y="3" width="18" height="18.500" rx="2.500" fill="url(#sg)" transform="rotate(-13 13.500 12.500)"/><path d="M19 7.500c-3-2-9-2-10 1s8 3 8.500 6-6 4-11 1.500" fill="none" stroke="#fff" stroke-width="3.200" stroke-linecap="round" transform="rotate(-8 13.500 12.500)"/></svg>
<span style="left:1347px;top:710.500px;font-size:16px;font-weight:bold;color:#3d8ad8;line-height:22px;font-family:'Liberation Sans','Noto Sans CJK SC',sans-serif">中</span>
<svg style="left:1367px;top:714px" width="14" height="14" viewBox="0 0 14 14"><path d="M8 .5c4 2.500 5.500 7 3 10.500S3.500 14.500.5 11c4 .5 7-1 8-4s.5-5-.5-6.500z" fill="#3d8ad8"/></svg>
<span style="left:1387px;top:709.500px;font-size:15px;font-weight:bold;color:#3d8ad8;line-height:22px;white-space:pre">°,</span>
<svg style="left:1404px;top:713px" width="15" height="15" viewBox="0 0 15 15"><path d="M10 1c-2.500 0-4.500 2-4 5L.8 12c-.8 1.500 1 3 2.200 2.200L8.500 9c3 .5 5.500-1.500 5.500-4.500l-2.500 2.500-2.500-1-.5-2.500 2.500-2.500z" fill="#3d8ad8"/></svg>
<!-- Delcam logo -->
<div style="left:1315px;top:819px;width:72px;height:21px;background:linear-gradient(90deg,#1763a6 0%,#2f8dd0 40%,#66c0f0 100%)"></div>
<div style="left:1377px;top:817px;width:26px;height:26px;border-radius:50%;background:#f0f0f0"></div>
<div style="left:1383px;top:819px;width:22px;height:22px;border-radius:50%;background:radial-gradient(circle at 40% 35%,#6cc0f0,#1a6cb0)"></div>
<span style="left:1318px;top:817px;font-size:18px;color:#fff;line-height:24px;letter-spacing:-.2px">Delcam</span>
<svg style="left:1385px;top:821px" width="19" height="19" viewBox="0 0 19 19"><g fill="none" stroke="#111" stroke-width="1.100"><path d="M9.500 5v14M9.500 6L5 2.500 1.500 8M9.500 6l4.500-3.500L17.500 8M9.500 7L4.500 5 2.500 12M9.500 7l5-2 2 7M9 8l-3 1-1 6M10 8l3 1 1 6"/></g><ellipse cx="9.500" cy="5.500" rx="1.800" ry="2" fill="#111"/></svg>
<!-- resize grip -->
<svg style="left:1415px;top:834px" width="11" height="11" viewBox="0 0 11 11"><g fill="#b8b8b8"><rect x="8" y="0" width="2" height="2"/><rect x="4" y="4" width="2" height="2"/><rect x="8" y="4" width="2" height="2"/><rect x="0" y="8" width="2" height="2"/><rect x="4" y="8" width="2" height="2"/><rect x="8" y="8" width="2" height="2"/></g></svg>
<!-- watermark -->
<svg style="left:1213px;top:829px" width="206" height="20" viewBox="0 0 206 20"><g font-family="Liberation Sans, Noto Sans CJK SC, sans-serif" font-weight="bold" font-size="13" stroke-linejoin="round"><text x="2" y="15" textLength="52" lengthAdjust="spacingAndGlyphs" fill="#fff" stroke="#fff" stroke-width="3.200">三维网</text><text x="55" y="15" textLength="148" lengthAdjust="spacingAndGlyphs" fill="#fff" stroke="#fff" stroke-width="3.200">www.3dportal.cn</text><text x="2" y="15" textLength="52" lengthAdjust="spacingAndGlyphs" fill="#fff" stroke="#e81414" stroke-width=".75">三维网</text><text x="55" y="15" textLength="148" lengthAdjust="spacingAndGlyphs" fill="#fff" stroke="#e81414" stroke-width=".75">www.3dportal.cn</text></g></svg>
</body></html>
